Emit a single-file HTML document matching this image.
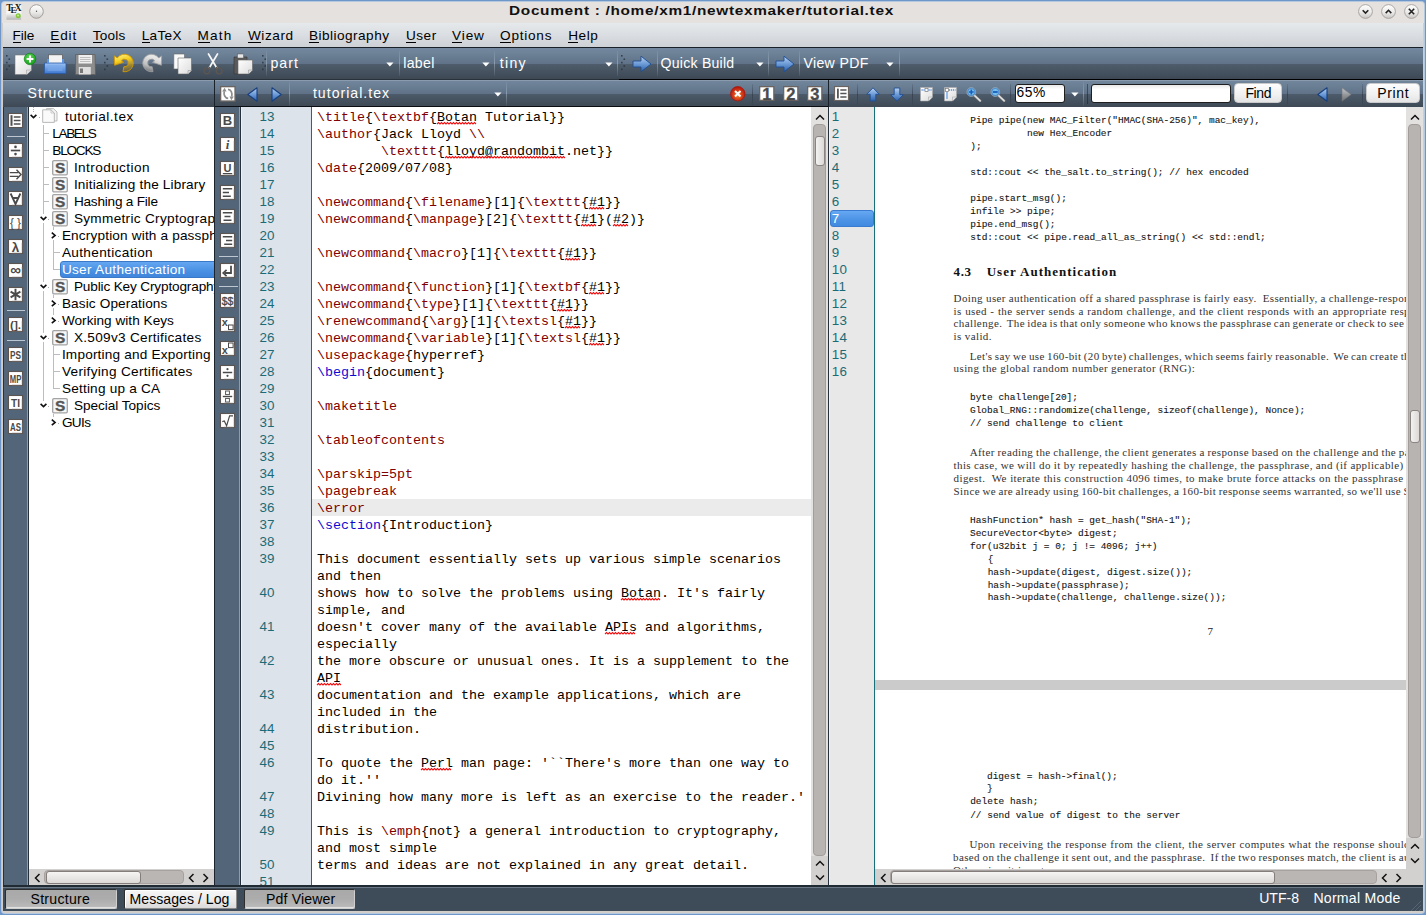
<!DOCTYPE html>
<html><head><meta charset="utf-8">
<style>
*{margin:0;padding:0;box-sizing:border-box}
html,body{width:1426px;height:915px;overflow:hidden;background:#6f96c8;font-family:"Liberation Sans",sans-serif}
.a{position:absolute}
.t{position:absolute;white-space:pre}
.blk{background:#0e1318}
.tb{background:linear-gradient(#74899f 0,#5f7287 53%,#4e5c6b 53%,#3d4854 100%)}
.hd{background:linear-gradient(#8a9bae 0,#8a9bae 1px,#71869c 1px,#5f7288 52%,#4d5b6a 52%,#3e4955 100%)}
.slate{background:#536579}
.sep{position:absolute;width:1px;background:linear-gradient(rgba(255,255,255,0.05),rgba(190,205,220,0.45),rgba(255,255,255,0.05))}
svg{position:absolute;overflow:visible}
</style></head><body>
<div class="a" style="left:0px;top:0px;width:1426px;height:915px;background:#6f96c8"></div>
<div class="a" style="left:1px;top:1px;width:1424px;height:913px;background:#b4c8e0;border-radius:4px"></div>
<div class="a" style="left:2px;top:2px;width:1422px;height:911px;background:#d3cdc9;border-radius:3px"></div>
<div class="a" style="left:2px;top:2px;width:1422px;height:21px;background:#e5e1df;border-radius:3px 3px 0 0"></div>
<div class="t" style="left:508.78px;top:11.23px;font:bold 13.2px 'Liberation Sans',sans-serif;height:0;line-height:0;color:#111;letter-spacing:0.600px;transform:scaleX(1.1649);transform-origin:0 0;">Document : /home/xm1/newtexmaker/tutorial.tex</div>
<svg width="0" height="0" style="position:absolute"><defs>
<linearGradient id="gBtn" x1="0" y1="0" x2="0" y2="1"><stop offset="0" stop-color="#ffffff"/><stop offset="0.55" stop-color="#ecebea"/><stop offset="1" stop-color="#c9c6c4"/></linearGradient>
<linearGradient id="gBlueArr" x1="0" y1="0" x2="0" y2="1"><stop offset="0" stop-color="#b9d3f2"/><stop offset="0.5" stop-color="#6c9ad6"/><stop offset="1" stop-color="#2c5fa8"/></linearGradient>
<linearGradient id="gPage" x1="0" y1="0" x2="1" y2="1"><stop offset="0" stop-color="#ffffff"/><stop offset="1" stop-color="#dcdcdc"/></linearGradient>
<linearGradient id="gSel" x1="0" y1="0" x2="0" y2="1"><stop offset="0" stop-color="#6fa9ee"/><stop offset="1" stop-color="#3b7ed6"/></linearGradient>
<radialGradient id="gRed" cx="0.5" cy="0.6" r="0.6"><stop offset="0" stop-color="#f08a2a"/><stop offset="0.55" stop-color="#d43a16"/><stop offset="1" stop-color="#b0140c"/></radialGradient>
<radialGradient id="gGreen" cx="0.45" cy="0.35" r="0.7"><stop offset="0" stop-color="#5fd85a"/><stop offset="1" stop-color="#0f9a14"/></radialGradient>
<linearGradient id="gYel" x1="0" y1="0" x2="0" y2="1"><stop offset="0" stop-color="#fff07a"/><stop offset="0.6" stop-color="#f1c40f"/><stop offset="1" stop-color="#c88a06"/></linearGradient>
<linearGradient id="gGray" x1="0" y1="0" x2="0" y2="1"><stop offset="0" stop-color="#d6d6d6"/><stop offset="1" stop-color="#7c7c7c"/></linearGradient>
<linearGradient id="gPrint" x1="0" y1="0" x2="0" y2="1"><stop offset="0" stop-color="#9cc3f5"/><stop offset="1" stop-color="#3d78d0"/></linearGradient>
<linearGradient id="gSlider" x1="0" y1="0" x2="1" y2="0"><stop offset="0" stop-color="#f4f3f2"/><stop offset="1" stop-color="#d9d6d4"/></linearGradient>
<linearGradient id="gSliderH" x1="0" y1="0" x2="0" y2="1"><stop offset="0" stop-color="#f7f6f5"/><stop offset="1" stop-color="#dad7d5"/></linearGradient>
</defs></svg>
<svg style="left:6px;top:4px;" width="16" height="17" viewBox="0 0 16 17"><defs><linearGradient id="gTexB" x1="0" y1="0" x2="0" y2="1"><stop offset="0" stop-color="#f2f2f2"/><stop offset="1" stop-color="#b5b5b5"/></linearGradient></defs><rect x="0.3" y="0.3" width="15" height="15.5" fill="#f8f8f8"/><rect x="0.3" y="9.3" width="15" height="6.5" fill="url(#gTexB)"/><text x="0.2" y="7.2" font-family="Liberation Serif" font-weight="bold" font-size="9.5" fill="#1a1a1a">T</text><text x="4.6" y="9" font-family="Liberation Serif" font-weight="bold" font-size="9" fill="#1a1a1a">E</text><text x="8.8" y="7.2" font-family="Liberation Serif" font-weight="bold" font-size="9.5" fill="#1a1a1a">X</text><circle cx="12.2" cy="11.7" r="2.5" fill="#84c83a"/><circle cx="12" cy="11.4" r="1" fill="#c2ec98"/></svg>
<svg style="left:29px;top:4px;" width="15" height="15" viewBox="0 0 15 15"><circle cx="7.5" cy="7.5" r="6.8" fill="url(#gBtn)" stroke="#9a9795" stroke-width="0.9"/><circle cx="7.5" cy="7.3" r="0.7" fill="#555"/></svg>
<svg style="left:1358.0px;top:4px;" width="15" height="15" viewBox="0 0 15 15"><circle cx="7.5" cy="7.5" r="6.9" fill="url(#gBtn)" stroke="#a19e9c" stroke-width="0.9"/><path d="M4.7 6.3 L7.5 9.1 L10.3 6.3" fill="none" stroke="#222" stroke-width="1.6"/></svg>
<svg style="left:1380.9px;top:4px;" width="15" height="15" viewBox="0 0 15 15"><circle cx="7.5" cy="7.5" r="6.9" fill="url(#gBtn)" stroke="#a19e9c" stroke-width="0.9"/><path d="M4.7 9.1 L7.5 6.3 L10.3 9.1" fill="none" stroke="#222" stroke-width="1.6"/></svg>
<svg style="left:1403.8px;top:4px;" width="15" height="15" viewBox="0 0 15 15"><circle cx="7.5" cy="7.5" r="6.9" fill="url(#gBtn)" stroke="#a19e9c" stroke-width="0.9"/><path d="M4.8 4.8 L10.2 10.2 M10.2 4.8 L4.8 10.2" fill="none" stroke="#222" stroke-width="1.6"/></svg>
<div class="a" style="left:3px;top:23px;width:1420px;height:24px;background:linear-gradient(#e6e9ec,#dadde1 50%,#cdd1d6)"></div>
<div class="t" style="left:12.38px;top:35.79px;font:13.6px 'Liberation Sans',sans-serif;height:0;line-height:0;color:#000;letter-spacing:-0.019px;">File</div>
<div class="a" style="left:13px;top:42px;width:8px;height:1px;background:#000"></div>
<div class="t" style="left:50.28px;top:35.79px;font:13.6px 'Liberation Sans',sans-serif;height:0;line-height:0;color:#000;letter-spacing:0.849px;">Edit</div>
<div class="a" style="left:50px;top:42px;width:10px;height:1px;background:#000"></div>
<div class="t" style="left:92.68px;top:35.79px;font:13.6px 'Liberation Sans',sans-serif;height:0;line-height:0;color:#000;letter-spacing:0.240px;">Tools</div>
<div class="a" style="left:93px;top:42px;width:9px;height:1px;background:#000"></div>
<div class="t" style="left:141.68px;top:35.79px;font:13.6px 'Liberation Sans',sans-serif;height:0;line-height:0;color:#000;letter-spacing:0.337px;">LaTeX</div>
<div class="a" style="left:142px;top:42px;width:8px;height:1px;background:#000"></div>
<div class="t" style="left:197.48px;top:35.79px;font:13.6px 'Liberation Sans',sans-serif;height:0;line-height:0;color:#000;letter-spacing:1.174px;">Math</div>
<div class="a" style="left:198px;top:42px;width:12px;height:1px;background:#000"></div>
<div class="t" style="left:247.98px;top:35.79px;font:13.6px 'Liberation Sans',sans-serif;height:0;line-height:0;color:#000;letter-spacing:0.573px;">Wizard</div>
<div class="a" style="left:248px;top:42px;width:13px;height:1px;background:#000"></div>
<div class="t" style="left:309.08px;top:35.79px;font:13.6px 'Liberation Sans',sans-serif;height:0;line-height:0;color:#000;letter-spacing:0.460px;">Bibliography</div>
<div class="a" style="left:309px;top:42px;width:10px;height:1px;background:#000"></div>
<div class="t" style="left:405.88px;top:35.79px;font:13.6px 'Liberation Sans',sans-serif;height:0;line-height:0;color:#000;letter-spacing:0.557px;">User</div>
<div class="a" style="left:406px;top:42px;width:10px;height:1px;background:#000"></div>
<div class="t" style="left:452.08px;top:35.79px;font:13.6px 'Liberation Sans',sans-serif;height:0;line-height:0;color:#000;letter-spacing:0.878px;">View</div>
<div class="a" style="left:452px;top:42px;width:10px;height:1px;background:#000"></div>
<div class="t" style="left:500.08px;top:35.79px;font:13.6px 'Liberation Sans',sans-serif;height:0;line-height:0;color:#000;letter-spacing:0.753px;">Options</div>
<div class="a" style="left:500px;top:42px;width:11px;height:1px;background:#000"></div>
<div class="t" style="left:568.28px;top:35.79px;font:13.6px 'Liberation Sans',sans-serif;height:0;line-height:0;color:#000;letter-spacing:0.541px;">Help</div>
<div class="a" style="left:568px;top:42px;width:10px;height:1px;background:#000"></div>
<div class="a" style="left:3px;top:47px;width:1420px;height:1px;background:#1a2027"></div>
<div class="a tb" style="left:3px;top:48px;width:1420px;height:31px"></div>
<div class="a" style="left:3px;top:79px;width:616px;height:1px;background:#28323b"></div>
<div class="a" style="left:619px;top:79px;width:804px;height:1px;background:#000"></div>
<svg style="left:6px;top:55px;" width="5" height="17" viewBox="0 0 5 17"><rect x="0" y="0.0" width="1.6" height="1.6" fill="#2a333c" opacity="0.8"/><rect x="2.5" y="3.4" width="1.6" height="1.6" fill="#2a333c" opacity="0.8"/><rect x="0" y="6.8" width="1.6" height="1.6" fill="#2a333c" opacity="0.8"/><rect x="2.5" y="10.2" width="1.6" height="1.6" fill="#2a333c" opacity="0.8"/><rect x="0" y="13.6" width="1.6" height="1.6" fill="#2a333c" opacity="0.8"/></svg>
<svg style="left:103.6px;top:55px;" width="5" height="17" viewBox="0 0 5 17"><rect x="0" y="0.0" width="1.6" height="1.6" fill="#2a333c" opacity="0.8"/><rect x="2.5" y="3.4" width="1.6" height="1.6" fill="#2a333c" opacity="0.8"/><rect x="0" y="6.8" width="1.6" height="1.6" fill="#2a333c" opacity="0.8"/><rect x="2.5" y="10.2" width="1.6" height="1.6" fill="#2a333c" opacity="0.8"/><rect x="0" y="13.6" width="1.6" height="1.6" fill="#2a333c" opacity="0.8"/></svg>
<svg style="left:262px;top:55px;" width="5" height="17" viewBox="0 0 5 17"><rect x="0" y="0.0" width="1.6" height="1.6" fill="#2a333c" opacity="0.8"/><rect x="2.5" y="3.4" width="1.6" height="1.6" fill="#2a333c" opacity="0.8"/><rect x="0" y="6.8" width="1.6" height="1.6" fill="#2a333c" opacity="0.8"/><rect x="2.5" y="10.2" width="1.6" height="1.6" fill="#2a333c" opacity="0.8"/><rect x="0" y="13.6" width="1.6" height="1.6" fill="#2a333c" opacity="0.8"/></svg>
<svg style="left:621.4px;top:55px;" width="5" height="17" viewBox="0 0 5 17"><rect x="0" y="0.0" width="1.6" height="1.6" fill="#2a333c" opacity="0.8"/><rect x="2.5" y="3.4" width="1.6" height="1.6" fill="#2a333c" opacity="0.8"/><rect x="0" y="6.8" width="1.6" height="1.6" fill="#2a333c" opacity="0.8"/><rect x="2.5" y="10.2" width="1.6" height="1.6" fill="#2a333c" opacity="0.8"/><rect x="0" y="13.6" width="1.6" height="1.6" fill="#2a333c" opacity="0.8"/></svg>
<svg style="left:14px;top:53px;" width="23" height="22" viewBox="0 0 23 22"><path d="M1 2 L13 2 L17.5 6.5 L17.5 17 L13 21.5 L1 21.5 Z" fill="url(#gPage)" stroke="#777" stroke-width="0.6"/><path d="M12.5 21.5 L12.5 17 L17.5 17" fill="#e0e0e0" stroke="#999" stroke-width="0.5"/><circle cx="16" cy="6" r="5.8" fill="url(#gGreen)" stroke="#0b7a0f" stroke-width="0.6"/><path d="M16 2.6 V9.4 M12.6 6 H19.4" stroke="#fff" stroke-width="2"/></svg>
<svg style="left:44px;top:54px;" width="23" height="21" viewBox="0 0 23 21"><rect x="4.5" y="0.8" width="14" height="9" fill="#f2f2f2" stroke="#555" stroke-width="0.7"/><path d="M0.5 9 L22 9 L22 19.5 L0.5 19.5 Z" fill="url(#gPrint)" stroke="#2b5ca8" stroke-width="0.8"/><rect x="3" y="5" width="2" height="5" fill="#5d93e0"/><rect x="18" y="5" width="2" height="5" fill="#5d93e0"/><rect x="3.5" y="11" width="15" height="6" fill="#7aa9ea" opacity="0.6"/></svg>
<svg style="left:75px;top:54px;" width="21" height="21" viewBox="0 0 21 21"><path d="M0.5 0.5 L20 0.5 L20.5 20.5 L0.5 20.5 Z" fill="#8d8d8d" stroke="#5c5c5c" stroke-width="0.7"/><rect x="3.5" y="1" width="13.5" height="8.5" fill="#efefef"/><path d="M5 3.5 H15.5 M5 5.5 H15.5 M5 7.5 H15.5" stroke="#aaa" stroke-width="0.7"/><rect x="3.8" y="13" width="12" height="7.5" fill="#dedede"/><rect x="5" y="14.5" width="3" height="4.5" fill="#777"/></svg>
<svg style="left:112px;top:53px;" width="22" height="20" viewBox="0 0 22 20"><defs><linearGradient id="gUndo" x1="0" y1="0" x2="0.3" y2="1"><stop offset="0" stop-color="#fff59a"/><stop offset="0.45" stop-color="#f4cc1a"/><stop offset="1" stop-color="#c89008" stop-opacity="0.35"/></linearGradient><linearGradient id="gRedo" x1="0" y1="0" x2="-0.3" y2="1"><stop offset="0" stop-color="#e6e6e6"/><stop offset="0.5" stop-color="#bdbdbd"/><stop offset="1" stop-color="#8a8a8a" stop-opacity="0.35"/></linearGradient></defs><path d="M5.29 4.95 A8.8 8.8 0 1 1 10.97 18.67 L11.84 13.74 A3.8 3.8 0 1 0 9.39 7.82 L11.52 9.31 L2.63 12.24 L2.34 2.89 Z" fill="url(#gUndo)" stroke="#d29a06" stroke-width="0.9" stroke-linejoin="round"/></svg>
<svg style="left:142px;top:53px;" width="22" height="20" viewBox="0 0 22 20"><path d="M16.71 4.95 A8.8 8.8 0 1 0 11.03 18.67 L10.16 13.74 A3.8 3.8 0 1 1 12.61 7.82 L10.48 9.31 L19.37 12.24 L19.66 2.89 Z" fill="url(#gRedo)" stroke="#a0a0a0" stroke-width="0.8" stroke-linejoin="round"/></svg>
<svg style="left:173px;top:53px;" width="20" height="22" viewBox="0 0 20 22"><path d="M0.8 1 L11.5 1 L11.5 16 L0.8 16 Z" fill="#fafafa" stroke="#666" stroke-width="0.6"/><path d="M5 5 L18.5 5 L18.5 17.5 L15 21 L5 21 Z" fill="url(#gPage)" stroke="#666" stroke-width="0.6"/><path d="M15 21 L15 17.5 L18.5 17.5" fill="#ddd" stroke="#888" stroke-width="0.5"/></svg>
<svg style="left:202px;top:53px;" width="22" height="22" viewBox="0 0 22 22"><path d="M6.5 1 L14.5 14.5 M15.5 1 L7.5 14.5" stroke="#f6f6f6" stroke-width="1.7" stroke-linecap="round"/><path d="M8 14 L6.5 16 M14 14 L15.5 16" stroke="#5e5650" stroke-width="1.3"/><circle cx="4.8" cy="18" r="2.9" fill="none" stroke="#5e5650" stroke-width="1.3"/><circle cx="17.2" cy="18" r="2.9" fill="none" stroke="#5e5650" stroke-width="1.3"/></svg>
<svg style="left:233px;top:53px;" width="21" height="22" viewBox="0 0 21 22"><path d="M1 4 L14 4 L14 21 L1 21 Z" fill="#5a5a5a" stroke="#333" stroke-width="0.6"/><rect x="4.5" y="1" width="6" height="4" fill="#e8e8e8" stroke="#555" stroke-width="0.5"/><path d="M5 7 L19.5 7 L19.5 17 L15.5 21 L5 21 Z" fill="url(#gPage)" stroke="#666" stroke-width="0.6"/><path d="M15.5 21 L15.5 17 L19.5 17" fill="#ddd" stroke="#888" stroke-width="0.5"/></svg>
<div class="sep" style="left:266.2px;top:51px;height:25px"></div>
<svg style="left:385.5px;top:62px;" width="8" height="5" viewBox="0 0 8 5"><path d="M0.3 0.5 L7.5 0.5 L3.9 4.6 Z" fill="#fff"/></svg>
<div class="sep" style="left:398.6px;top:51px;height:25px"></div>
<svg style="left:481.7px;top:62px;" width="8" height="5" viewBox="0 0 8 5"><path d="M0.3 0.5 L7.5 0.5 L3.9 4.6 Z" fill="#fff"/></svg>
<div class="sep" style="left:494.3px;top:51px;height:25px"></div>
<svg style="left:604.9px;top:62px;" width="8" height="5" viewBox="0 0 8 5"><path d="M0.3 0.5 L7.5 0.5 L3.9 4.6 Z" fill="#fff"/></svg>
<div class="sep" style="left:617.4px;top:51px;height:25px"></div>
<svg style="left:631.5px;top:55px;" width="20" height="18" viewBox="0 0 20 18"><path d="M1 6 L9 6 L9 1.2 L19 9 L9 16.8 L9 12 L1 12 Z" fill="url(#gBlueArr)" stroke="#1f4f94" stroke-width="0.9" stroke-linejoin="round"/></svg>
<div class="sep" style="left:656.6px;top:51px;height:25px"></div>
<svg style="left:755.6px;top:62px;" width="8" height="5" viewBox="0 0 8 5"><path d="M0.3 0.5 L7.5 0.5 L3.9 4.6 Z" fill="#fff"/></svg>
<div class="sep" style="left:768.4px;top:51px;height:25px"></div>
<svg style="left:774.5px;top:55px;" width="20" height="18" viewBox="0 0 20 18"><path d="M1 6 L9 6 L9 1.2 L19 9 L9 16.8 L9 12 L1 12 Z" fill="url(#gBlueArr)" stroke="#1f4f94" stroke-width="0.9" stroke-linejoin="round"/></svg>
<div class="sep" style="left:799.4px;top:51px;height:25px"></div>
<svg style="left:886.3px;top:62px;" width="8" height="5" viewBox="0 0 8 5"><path d="M0.3 0.5 L7.5 0.5 L3.9 4.6 Z" fill="#fff"/></svg>
<div class="sep" style="left:899.2px;top:51px;height:25px"></div>
<div class="t" style="left:270.45px;top:63.11px;font:14.1px 'Liberation Sans',sans-serif;height:0;line-height:0;color:#fff;letter-spacing:1.024px;">part</div>
<div class="t" style="left:403.15px;top:63.11px;font:14.1px 'Liberation Sans',sans-serif;height:0;line-height:0;color:#fff;letter-spacing:0.382px;">label</div>
<div class="t" style="left:499.85px;top:63.11px;font:14.1px 'Liberation Sans',sans-serif;height:0;line-height:0;color:#fff;letter-spacing:1.264px;">tiny</div>
<div class="t" style="left:660.55px;top:63.11px;font:14.1px 'Liberation Sans',sans-serif;height:0;line-height:0;color:#fff;letter-spacing:0.237px;">Quick Build</div>
<div class="t" style="left:803.45px;top:63.11px;font:14.1px 'Liberation Sans',sans-serif;height:0;line-height:0;color:#fff;letter-spacing:0.348px;">View PDF</div>
<div class="a hd" style="left:3px;top:80px;width:211px;height:27px"></div>
<div class="a" style="left:214px;top:80px;width:1px;height:27px;background:#1a2128"></div>
<div class="a hd" style="left:215px;top:80px;width:613px;height:26px"></div>
<div class="a" style="left:215px;top:106px;width:613px;height:1px;background:#0b0f13"></div>
<div class="a" style="left:828px;top:80px;width:1px;height:27px;background:#1a2128"></div>
<div class="a hd" style="left:829px;top:80px;width:594px;height:27px"></div>
<div class="t" style="left:27.55px;top:93.11px;font:14.1px 'Liberation Sans',sans-serif;height:0;line-height:0;color:#fff;letter-spacing:0.945px;">Structure</div>
<div class="t" style="left:312.95px;top:92.81px;font:14.1px 'Liberation Sans',sans-serif;height:0;line-height:0;color:#fff;letter-spacing:1.013px;">tutorial.tex</div>
<svg style="left:220px;top:86px;" width="15.7" height="15.7" viewBox="0 0 15.7 15.7"><rect x="0.65" y="0.65" width="14.399999999999999" height="14.399999999999999" fill="#fff" stroke="#6b6461" stroke-width="1.3"/><path d="M4.3 5.2 C3.4 8.6 5 12.2 8.2 12.4" fill="none" stroke="#8d8d8d" stroke-width="1.7"/><path d="M8 3.4 C11 3.6 12.6 7 11.7 10.6" fill="none" stroke="#8d8d8d" stroke-width="1.7"/><path d="M4.6 1.8 L2.2 5.6 L6.6 5.6 Z" fill="#8d8d8d"/><path d="M11.4 14.2 L13.8 10.4 L9.4 10.4 Z" fill="#8d8d8d"/></svg>
<svg style="left:246.5px;top:86.5px;" width="11" height="15" viewBox="0 0 11 15"><path d="M10 0.8 L10 14.2 L0.8 7.5 Z" fill="url(#gBlueArr)" stroke="#173f7e" stroke-width="1.1" stroke-linejoin="round"/></svg>
<svg style="left:270.5px;top:86.5px;" width="11" height="15" viewBox="0 0 11 15"><path d="M1 0.8 L1 14.2 L10.2 7.5 Z" fill="url(#gBlueArr)" stroke="#173f7e" stroke-width="1.1" stroke-linejoin="round"/></svg>
<div class="sep" style="left:288.5px;top:82px;height:24px"></div>
<svg style="left:493.7px;top:91.5px;" width="8" height="5" viewBox="0 0 8 5"><path d="M0.3 0.5 L7.5 0.5 L3.9 4.6 Z" fill="#fff"/></svg>
<div class="sep" style="left:506px;top:82px;height:24px"></div>
<svg style="left:729.5px;top:86px;" width="15.5" height="15.5" viewBox="0 0 15.5 15.5"><circle cx="7.75" cy="7.75" r="7.2" fill="url(#gRed)" stroke="#a8150c" stroke-width="0.8"/><path d="M5 5 L10.5 10.5 M10.5 5 L5 10.5" stroke="#fff" stroke-width="2"/></svg>
<div class="a" style="left:752.4px;top:84px;width:1px;height:21px;background:linear-gradient(rgba(40,50,62,0.15),rgba(40,50,62,0.55),rgba(40,50,62,0.15))"></div>
<svg style="left:759.2px;top:86.3px;" width="15.5" height="15" viewBox="0 0 15.5 15"><rect x="0.65" y="0.65" width="14.2" height="13.7" fill="#fff" stroke="#6b6461" stroke-width="1.3"/><text x="7.9" y="13.6" text-anchor="middle" font-family="Liberation Sans" font-weight="bold" font-size="16.5" fill="#4a4a4a" stroke="#4a4a4a" stroke-width="0.3">1</text></svg>
<svg style="left:783.2px;top:86.3px;" width="15.5" height="15" viewBox="0 0 15.5 15"><rect x="0.65" y="0.65" width="14.2" height="13.7" fill="#fff" stroke="#6b6461" stroke-width="1.3"/><text x="7.9" y="13.6" text-anchor="middle" font-family="Liberation Sans" font-weight="bold" font-size="16.5" fill="#4a4a4a" stroke="#4a4a4a" stroke-width="0.3">2</text></svg>
<svg style="left:807.2px;top:86.3px;" width="15.5" height="15" viewBox="0 0 15.5 15"><rect x="0.65" y="0.65" width="14.2" height="13.7" fill="#fff" stroke="#6b6461" stroke-width="1.3"/><text x="7.9" y="13.6" text-anchor="middle" font-family="Liberation Sans" font-weight="bold" font-size="16.5" fill="#4a4a4a" stroke="#4a4a4a" stroke-width="0.3">3</text></svg>
<svg style="left:834.3px;top:86.3px;" width="15" height="15" viewBox="0 0 15 15"><rect x="0.55" y="0.55" width="13.9" height="13.9" fill="#fff" stroke="#6b6461" stroke-width="1.1"/><rect x="3" y="2.6" width="1.8" height="9.8" fill="#555"/><path d="M6.3 4 H12.5 M6.3 7.5 H12.5 M6.3 11 H12.5" stroke="#555" stroke-width="1.5"/></svg>
<div class="a" style="left:857.2px;top:84px;width:1px;height:21px;background:linear-gradient(rgba(40,50,62,0.15),rgba(40,50,62,0.55),rgba(40,50,62,0.15))"></div>
<svg style="left:865.5px;top:86.5px;" width="14" height="15" viewBox="0 0 14 15"><path d="M7 0.8 L13.3 7.3 L9.8 7.3 L9.8 14 L4.2 14 L4.2 7.3 L0.7 7.3 Z" fill="url(#gBlueArr)" stroke="#1f4f94" stroke-width="0.9" stroke-linejoin="round"/></svg>
<svg style="left:889.5px;top:86.5px;" width="14" height="15" viewBox="0 0 14 15"><path d="M7 14.2 L13.3 7.7 L9.8 7.7 L9.8 1 L4.2 1 L4.2 7.7 L0.7 7.7 Z" fill="url(#gBlueArr)" stroke="#1f4f94" stroke-width="0.9" stroke-linejoin="round"/></svg>
<div class="a" style="left:911.7px;top:84px;width:1px;height:21px;background:linear-gradient(rgba(40,50,62,0.15),rgba(40,50,62,0.55),rgba(40,50,62,0.15))"></div>
<svg style="left:919.5px;top:87px;" width="13" height="14.5" viewBox="0 0 13 14.5"><path d="M0.5 0.5 L12.5 0.5 L12.5 10 L8.5 14 L0.5 14 Z" fill="url(#gPage)" stroke="#aaa" stroke-width="0.6"/><path d="M8.5 14 L8.5 10 L12.5 10" fill="#e6e6e6" stroke="#999" stroke-width="0.5"/><rect x="5" y="1.5" width="3" height="3" fill="#fff" stroke="#777" stroke-width="0.7"/><path d="M1.5 3 H4.5 M8.5 3 H11.5" stroke="#4d8fe6" stroke-width="1.4" stroke-dasharray="1.2 0.8"/></svg>
<svg style="left:943.6px;top:87px;" width="13" height="14.5" viewBox="0 0 13 14.5"><path d="M0.5 0.5 L12.5 0.5 L12.5 10 L8.5 14 L0.5 14 Z" fill="url(#gPage)" stroke="#aaa" stroke-width="0.6"/><path d="M8.5 14 L8.5 10 L12.5 10" fill="#e6e6e6" stroke="#999" stroke-width="0.5"/><rect x="1.5" y="1.5" width="3" height="3" fill="#fff" stroke="#777" stroke-width="0.7"/><path d="M5 3 H11.5" stroke="#4d8fe6" stroke-width="1.4" stroke-dasharray="1.2 0.8"/><path d="M3 5 V12" stroke="#4d8fe6" stroke-width="1.1"/></svg>
<svg style="left:965.6px;top:86.6px;" width="16" height="15" viewBox="0 0 16 15"><path d="M8.3 8.3 L14.2 13.8" stroke="#9a9a9a" stroke-width="2.4" stroke-linecap="round"/><path d="M8.3 8.3 L14.2 13.8" stroke="#e4e4e4" stroke-width="1.3" stroke-linecap="round"/><circle cx="5.3" cy="5" r="4.4" fill="#76c0e8" stroke="#8fa0ae" stroke-width="1"/><circle cx="5.3" cy="5" r="3.6" fill="none" stroke="#2a62c0" stroke-width="0.8" opacity="0.7"/><path d="M5.3 2.6 V7.4 M2.9 5 H7.7" stroke="#1a5cc0" stroke-width="1.6"/></svg>
<svg style="left:990.1px;top:86.6px;" width="16" height="15" viewBox="0 0 16 15"><path d="M8.3 8.3 L14.2 13.8" stroke="#9a9a9a" stroke-width="2.4" stroke-linecap="round"/><path d="M8.3 8.3 L14.2 13.8" stroke="#e4e4e4" stroke-width="1.3" stroke-linecap="round"/><circle cx="5.3" cy="5" r="4.4" fill="#76c0e8" stroke="#8fa0ae" stroke-width="1"/><circle cx="5.3" cy="5" r="3.6" fill="none" stroke="#2a62c0" stroke-width="0.8" opacity="0.7"/><path d="M2.9 5 H7.7" stroke="#1a5cc0" stroke-width="1.8"/></svg>
<div class="a" style="left:1010.4px;top:84px;width:1px;height:21px;background:linear-gradient(rgba(40,50,62,0.15),rgba(40,50,62,0.55),rgba(40,50,62,0.15))"></div>
<div class="a" style="left:1015.4px;top:84.1px;width:49.2px;height:18.5px;border:1px solid #1e1e1e;border-radius:3px;background:linear-gradient(#e9e9e9,#fff 25%,#fff)"></div>
<div class="t" style="left:1016.57px;top:92.92px;font:13.8px 'Liberation Sans',sans-serif;height:0;line-height:0;color:#000;letter-spacing:0.544px;">65%</div>
<svg style="left:1070.8px;top:92px;" width="8" height="5" viewBox="0 0 8 5"><path d="M0.3 0.5 L7.5 0.5 L3.9 4.6 Z" fill="#fff"/></svg>
<div class="sep" style="left:1083.2px;top:82px;height:24px"></div>
<div class="a" style="left:1087px;top:84px;width:1px;height:20px;background:rgba(20,28,36,0.5)"></div>
<div class="a" style="left:1090.5px;top:83.7px;width:140.5px;height:19.2px;border:1px solid #1e1e1e;border-radius:3px;background:linear-gradient(#e9e9e9,#fff 25%,#fff)"></div>
<div class="a" style="left:1234.2px;top:83.2px;width:47.8px;height:19.8px;border-radius:4px;background:linear-gradient(#fdfdfd,#f0f0f0 60%,#e4e4e4);border:1px solid #c9c9c9"></div>
<div class="t" style="left:1245.46px;top:92.85px;font:14px 'Liberation Sans',sans-serif;height:0;line-height:0;color:#000;letter-spacing:-0.389px;">Find</div>
<div class="a" style="left:1287.3px;top:84px;width:1px;height:21px;background:linear-gradient(rgba(40,50,62,0.15),rgba(40,50,62,0.55),rgba(40,50,62,0.15))"></div>
<svg style="left:1316.8px;top:86.5px;" width="11" height="15" viewBox="0 0 11 15"><path d="M10 0.8 L10 14.2 L0.8 7.5 Z" fill="url(#gBlueArr)" stroke="#173f7e" stroke-width="1.1" stroke-linejoin="round"/></svg>
<svg style="left:1340.7px;top:86.5px;" width="11" height="15" viewBox="0 0 11 15"><path d="M1 0.8 L1 14.2 L10.2 7.5 Z" fill="url(#gGray)" stroke="#7a7a7a" stroke-width="0.6" stroke-linejoin="round" opacity="0.8"/></svg>
<div class="a" style="left:1361.5px;top:84px;width:1px;height:21px;background:linear-gradient(rgba(40,50,62,0.15),rgba(40,50,62,0.55),rgba(40,50,62,0.15))"></div>
<div class="a" style="left:1366.3px;top:83.2px;width:53.5px;height:19.8px;border-radius:4px;background:linear-gradient(#fdfdfd,#f0f0f0 60%,#e4e4e4);border:1px solid #c9c9c9"></div>
<div class="t" style="left:1377.36px;top:93.15px;font:14px 'Liberation Sans',sans-serif;height:0;line-height:0;color:#000;letter-spacing:0.617px;">Print</div>
<div class="a" style="left:3px;top:107px;width:25px;height:779px;background:#536579"></div>
<div class="a" style="left:3px;top:107px;width:1px;height:779px;background:#27313b"></div>
<div class="a" style="left:26.7px;top:107px;width:1.1px;height:779px;background:#8e9bab"></div>
<div class="a" style="left:28px;top:107px;width:1px;height:779px;background:#27313b"></div>
<div class="a" style="left:29px;top:107px;width:185px;height:779px;background:#fff"></div>
<div class="a" style="left:214px;top:107px;width:25px;height:779px;background:#536579"></div>
<div class="a" style="left:214px;top:107px;width:1.4px;height:779px;background:#1c252e"></div>
<div class="a" style="left:238.8px;top:107px;width:1px;height:779px;background:#8e9bab"></div>
<div class="a" style="left:239.8px;top:107px;width:1.2px;height:779px;background:#27313b"></div>
<div class="a" style="left:241px;top:107px;width:1px;height:779px;background:#eef1f7"></div>
<div class="a" style="left:242px;top:107px;width:69px;height:779px;background:#dde3eb"></div>
<div class="a" style="left:311px;top:107px;width:1px;height:779px;background:#17707a"></div>
<div class="a" style="left:312px;top:107px;width:499px;height:779px;background:#fff"></div>
<div class="a" style="left:811px;top:107px;width:17px;height:779px;background:#e1dfde"></div>
<div class="a" style="left:828px;top:107px;width:1.2px;height:779px;background:#27313b"></div>
<div class="a" style="left:829.2px;top:107px;width:0.8px;height:779px;background:#eef1f7"></div>
<div class="a" style="left:830px;top:107px;width:44px;height:779px;background:#e8e8e8"></div>
<div class="a" style="left:873.8px;top:107px;width:0.7px;height:779px;background:#f2eeec"></div>
<div class="a" style="left:874.4px;top:107px;width:1.1px;height:779px;background:#17707a"></div>
<div class="a" style="left:875.5px;top:107px;width:531px;height:762px;background:#fff"></div>
<div class="a" style="left:1406px;top:107px;width:17px;height:779px;background:#e1dfde"></div>
<div class="a" style="left:28px;top:107px;width:186px;height:762px;overflow:hidden">
<div class="a" style="left:5.299999999999997px;top:0px;width:1px;height:1.2px;background:#b0b0b0"></div>
<div class="a" style="left:5.299999999999997px;top:2px;width:1px;height:1.2px;background:#b0b0b0"></div>
<div class="a" style="left:5.299999999999997px;top:4px;width:1px;height:1.2px;background:#b0b0b0"></div>
<div class="a" style="left:10.600000000000001px;top:9.5px;width:1px;height:1px;background:#aaa"></div>
<div class="a" style="left:15px;top:18px;width:1px;height:88.9px;background:#bdbdbd"></div>
<div class="a" style="left:15px;top:116.20000000000002px;width:1px;height:58.69999999999996px;background:#bdbdbd"></div>
<div class="a" style="left:15px;top:184.2px;width:1px;height:41.69999999999999px;background:#bdbdbd"></div>
<div class="a" style="left:15px;top:235.2px;width:1px;height:58.69999999999999px;background:#bdbdbd"></div>
<div class="a" style="left:15px;top:26px;width:6px;height:1px;background:#bdbdbd"></div>
<div class="a" style="left:15px;top:43px;width:6px;height:1px;background:#bdbdbd"></div>
<div class="a" style="left:15px;top:60px;width:6px;height:1px;background:#bdbdbd"></div>
<div class="a" style="left:15px;top:77px;width:6px;height:1px;background:#bdbdbd"></div>
<div class="a" style="left:15px;top:94px;width:6px;height:1px;background:#bdbdbd"></div>
<div class="a" style="left:20.200000000000003px;top:111.5px;width:1px;height:1px;background:#aaa"></div>
<div class="a" style="left:20.200000000000003px;top:179.5px;width:1px;height:1px;background:#aaa"></div>
<div class="a" style="left:20.200000000000003px;top:230.5px;width:1px;height:1px;background:#aaa"></div>
<div class="a" style="left:20.200000000000003px;top:298.5px;width:1px;height:1px;background:#aaa"></div>
<div class="a" style="left:25px;top:119.5px;width:1px;height:3.5px;background:#bdbdbd"></div>
<div class="a" style="left:25px;top:133px;width:1px;height:30px;background:#bdbdbd"></div>
<div class="a" style="left:25px;top:145px;width:6.5px;height:1px;background:#bdbdbd"></div>
<div class="a" style="left:25px;top:162px;width:6.5px;height:1px;background:#bdbdbd"></div>
<div class="a" style="left:29.5px;top:128.5px;width:1px;height:1px;background:#aaa"></div>
<div class="a" style="left:25px;top:187.5px;width:1px;height:3.5px;background:#bdbdbd"></div>
<div class="a" style="left:25px;top:201px;width:1px;height:7px;background:#bdbdbd"></div>
<div class="a" style="left:29.5px;top:196.5px;width:1px;height:1px;background:#aaa"></div>
<div class="a" style="left:29.5px;top:213.5px;width:1px;height:1px;background:#aaa"></div>
<div class="a" style="left:25px;top:238.5px;width:1px;height:43.5px;background:#bdbdbd"></div>
<div class="a" style="left:25px;top:247px;width:6.5px;height:1px;background:#bdbdbd"></div>
<div class="a" style="left:25px;top:264px;width:6.5px;height:1px;background:#bdbdbd"></div>
<div class="a" style="left:25px;top:281px;width:6.5px;height:1px;background:#bdbdbd"></div>
<div class="a" style="left:25px;top:306.5px;width:1px;height:3.5px;background:#bdbdbd"></div>
<div class="a" style="left:29.5px;top:315.5px;width:1px;height:1px;background:#aaa"></div>
<div class="t" style="left:36.90px;top:10.19px;font:13.6px 'Liberation Sans',sans-serif;height:0;line-height:0;color:#000;letter-spacing:0.515px;">tutorial.tex</div>
<svg style="left:2.3000000000000007px;top:6.900000000000007px;" width="7" height="6" viewBox="0 0 7 6"><path d="M0.6 0.9 L3.5 3.7 L6.4 0.9" fill="none" stroke="#111" stroke-width="1.6"/></svg>
<div class="t" style="left:24.30px;top:27.19px;font:13.6px 'Liberation Sans',sans-serif;height:0;line-height:0;color:#000;letter-spacing:-1.398px;">LABELS</div>
<div class="t" style="left:24.30px;top:44.19px;font:13.6px 'Liberation Sans',sans-serif;height:0;line-height:0;color:#000;letter-spacing:-1.226px;">BLOCKS</div>
<div class="t" style="left:45.90px;top:61.19px;font:13.6px 'Liberation Sans',sans-serif;height:0;line-height:0;color:#000;letter-spacing:0.413px;">Introduction</div>
<svg style="left:24.200000000000003px;top:53.0px;" width="16" height="15.5" viewBox="0 0 16 15.5"><rect x="0.7" y="0.7" width="14.6" height="14.1" rx="1.2" fill="#f6f6f6" stroke="#a3a3a3" stroke-width="1.3"/><text x="8.1" y="13.2" text-anchor="middle" font-family="Liberation Sans" font-weight="bold" font-size="15.5" fill="#555" stroke="#555" stroke-width="0.3">S</text></svg>
<div class="t" style="left:45.90px;top:78.19px;font:13.6px 'Liberation Sans',sans-serif;height:0;line-height:0;color:#000;letter-spacing:0.162px;">Initializing the Library</div>
<svg style="left:24.200000000000003px;top:70.0px;" width="16" height="15.5" viewBox="0 0 16 15.5"><rect x="0.7" y="0.7" width="14.6" height="14.1" rx="1.2" fill="#f6f6f6" stroke="#a3a3a3" stroke-width="1.3"/><text x="8.1" y="13.2" text-anchor="middle" font-family="Liberation Sans" font-weight="bold" font-size="15.5" fill="#555" stroke="#555" stroke-width="0.3">S</text></svg>
<div class="t" style="left:45.90px;top:95.19px;font:13.6px 'Liberation Sans',sans-serif;height:0;line-height:0;color:#000;letter-spacing:-0.215px;">Hashing a File</div>
<svg style="left:24.200000000000003px;top:87.0px;" width="16" height="15.5" viewBox="0 0 16 15.5"><rect x="0.7" y="0.7" width="14.6" height="14.1" rx="1.2" fill="#f6f6f6" stroke="#a3a3a3" stroke-width="1.3"/><text x="8.1" y="13.2" text-anchor="middle" font-family="Liberation Sans" font-weight="bold" font-size="15.5" fill="#555" stroke="#555" stroke-width="0.3">S</text></svg>
<div class="t" style="left:45.90px;top:112.19px;font:13.6px 'Liberation Sans',sans-serif;height:0;line-height:0;color:#000;letter-spacing:0.309px;">Symmetric Cryptography</div>
<svg style="left:24.200000000000003px;top:104.0px;" width="16" height="15.5" viewBox="0 0 16 15.5"><rect x="0.7" y="0.7" width="14.6" height="14.1" rx="1.2" fill="#f6f6f6" stroke="#a3a3a3" stroke-width="1.3"/><text x="8.1" y="13.2" text-anchor="middle" font-family="Liberation Sans" font-weight="bold" font-size="15.5" fill="#555" stroke="#555" stroke-width="0.3">S</text></svg>
<svg style="left:11.799999999999997px;top:108.9px;" width="7" height="6" viewBox="0 0 7 6"><path d="M0.6 0.9 L3.5 3.7 L6.4 0.9" fill="none" stroke="#111" stroke-width="1.6"/></svg>
<div class="t" style="left:33.90px;top:129.19px;font:13.6px 'Liberation Sans',sans-serif;height:0;line-height:0;color:#000;letter-spacing:0.166px;">Encryption with a passphrase</div>
<svg style="left:23.1px;top:125.30000000000001px;" width="6" height="7" viewBox="0 0 6 7"><path d="M0.8 0.6 L4.1 3.4 L0.8 6.2" fill="none" stroke="#111" stroke-width="1.6"/></svg>
<div class="t" style="left:33.90px;top:146.19px;font:13.6px 'Liberation Sans',sans-serif;height:0;line-height:0;color:#000;letter-spacing:0.353px;">Authentication</div>
<div class="a" style="left:31.5px;top:154.3px;width:158.5px;height:16.3px;border-radius:3px;background:linear-gradient(#64a6f0,#4b92e4 55%,#3f86dc);border:1px solid #3a78c8"></div>
<div class="t" style="left:33.90px;top:163.19px;font:13.6px 'Liberation Sans',sans-serif;height:0;line-height:0;color:#fff;letter-spacing:0.300px;">User Authentication</div>
<div class="t" style="left:45.90px;top:180.19px;font:13.6px 'Liberation Sans',sans-serif;height:0;line-height:0;color:#000;letter-spacing:-0.146px;">Public Key Cryptography</div>
<svg style="left:24.200000000000003px;top:172.0px;" width="16" height="15.5" viewBox="0 0 16 15.5"><rect x="0.7" y="0.7" width="14.6" height="14.1" rx="1.2" fill="#f6f6f6" stroke="#a3a3a3" stroke-width="1.3"/><text x="8.1" y="13.2" text-anchor="middle" font-family="Liberation Sans" font-weight="bold" font-size="15.5" fill="#555" stroke="#555" stroke-width="0.3">S</text></svg>
<svg style="left:11.799999999999997px;top:176.89999999999998px;" width="7" height="6" viewBox="0 0 7 6"><path d="M0.6 0.9 L3.5 3.7 L6.4 0.9" fill="none" stroke="#111" stroke-width="1.6"/></svg>
<div class="t" style="left:33.90px;top:197.19px;font:13.6px 'Liberation Sans',sans-serif;height:0;line-height:0;color:#000;letter-spacing:0.130px;">Basic Operations</div>
<svg style="left:23.1px;top:193.29999999999998px;" width="6" height="7" viewBox="0 0 6 7"><path d="M0.8 0.6 L4.1 3.4 L0.8 6.2" fill="none" stroke="#111" stroke-width="1.6"/></svg>
<div class="t" style="left:33.90px;top:214.19px;font:13.6px 'Liberation Sans',sans-serif;height:0;line-height:0;color:#000;letter-spacing:0.026px;">Working with Keys</div>
<svg style="left:23.1px;top:210.29999999999998px;" width="6" height="7" viewBox="0 0 6 7"><path d="M0.8 0.6 L4.1 3.4 L0.8 6.2" fill="none" stroke="#111" stroke-width="1.6"/></svg>
<div class="t" style="left:45.90px;top:231.19px;font:13.6px 'Liberation Sans',sans-serif;height:0;line-height:0;color:#000;letter-spacing:0.297px;">X.509v3 Certificates</div>
<svg style="left:24.200000000000003px;top:223.0px;" width="16" height="15.5" viewBox="0 0 16 15.5"><rect x="0.7" y="0.7" width="14.6" height="14.1" rx="1.2" fill="#f6f6f6" stroke="#a3a3a3" stroke-width="1.3"/><text x="8.1" y="13.2" text-anchor="middle" font-family="Liberation Sans" font-weight="bold" font-size="15.5" fill="#555" stroke="#555" stroke-width="0.3">S</text></svg>
<svg style="left:11.799999999999997px;top:227.89999999999998px;" width="7" height="6" viewBox="0 0 7 6"><path d="M0.6 0.9 L3.5 3.7 L6.4 0.9" fill="none" stroke="#111" stroke-width="1.6"/></svg>
<div class="t" style="left:33.90px;top:248.19px;font:13.6px 'Liberation Sans',sans-serif;height:0;line-height:0;color:#000;letter-spacing:0.194px;">Importing and Exporting</div>
<div class="t" style="left:33.90px;top:265.19px;font:13.6px 'Liberation Sans',sans-serif;height:0;line-height:0;color:#000;letter-spacing:0.313px;">Verifying Certificates</div>
<div class="t" style="left:33.90px;top:282.19px;font:13.6px 'Liberation Sans',sans-serif;height:0;line-height:0;color:#000;letter-spacing:0.205px;">Setting up a CA</div>
<div class="t" style="left:45.90px;top:299.19px;font:13.6px 'Liberation Sans',sans-serif;height:0;line-height:0;color:#000;letter-spacing:-0.025px;">Special Topics</div>
<svg style="left:24.200000000000003px;top:291.0px;" width="16" height="15.5" viewBox="0 0 16 15.5"><rect x="0.7" y="0.7" width="14.6" height="14.1" rx="1.2" fill="#f6f6f6" stroke="#a3a3a3" stroke-width="1.3"/><text x="8.1" y="13.2" text-anchor="middle" font-family="Liberation Sans" font-weight="bold" font-size="15.5" fill="#555" stroke="#555" stroke-width="0.3">S</text></svg>
<svg style="left:11.799999999999997px;top:295.9px;" width="7" height="6" viewBox="0 0 7 6"><path d="M0.6 0.9 L3.5 3.7 L6.4 0.9" fill="none" stroke="#111" stroke-width="1.6"/></svg>
<div class="t" style="left:33.90px;top:316.19px;font:13.6px 'Liberation Sans',sans-serif;height:0;line-height:0;color:#000;letter-spacing:-0.592px;">GUIs</div>
<svg style="left:23.1px;top:312.3px;" width="6" height="7" viewBox="0 0 6 7"><path d="M0.8 0.6 L4.1 3.4 L0.8 6.2" fill="none" stroke="#111" stroke-width="1.6"/></svg>
<svg style="left:14px;top:1px;" width="16" height="15" viewBox="0 0 16 15"><path d="M4.5 0.6 L11.5 0.6 L15 4 L15 13 L4.5 13 Z" fill="#f4f4f4" stroke="#b5b5b5" stroke-width="0.9"/><path d="M0.7 1.8 L9 1.8 L12.3 5 L12.3 14.4 L0.7 14.4 Z" fill="#fafafa" stroke="#b0b0b0" stroke-width="0.9"/><path d="M9 1.8 L9 5 L12.3 5" fill="none" stroke="#b8b8b8" stroke-width="0.7"/></svg>
</div>
<div class="a" style="left:312px;top:499px;width:499px;height:17px;background:#ebebeb"></div>
<div class="t" style="left:259.48px;top:117.16px;font:13.4px 'Liberation Sans',sans-serif;height:0;line-height:0;color:#1b6b76;letter-spacing:0.200px;">13</div>
<div class="t" style="left:317.00px;top:117.85px;font:13.33px 'Liberation Mono',monospace;height:0;line-height:0;color:#800000;">\title</div>
<div class="t" style="left:365.00px;top:117.85px;font:13.33px 'Liberation Mono',monospace;height:0;line-height:0;color:#000;">{</div>
<div class="t" style="left:373.00px;top:117.85px;font:13.33px 'Liberation Mono',monospace;height:0;line-height:0;color:#800000;">\textbf</div>
<div class="t" style="left:429.00px;top:117.85px;font:13.33px 'Liberation Mono',monospace;height:0;line-height:0;color:#000;">{</div>
<div class="t" style="left:437.00px;top:117.85px;font:13.33px 'Liberation Mono',monospace;height:0;line-height:0;color:#000;">Botan</div>
<svg style="left:437px;top:121.6px;" width="40" height="3" viewBox="0 0 40 3"><path d="M0 2 l1.5 -1.4 l1.5 1.4 l1.5 -1.4 l1.5 1.4 l1.5 -1.4 l1.5 1.4 l1.5 -1.4 l1.5 1.4 l1.5 -1.4 l1.5 1.4 l1.5 -1.4 l1.5 1.4 l1.5 -1.4 l1.5 1.4 l1.5 -1.4 l1.5 1.4 l1.5 -1.4 l1.5 1.4 l1.5 -1.4 l1.5 1.4 l1.5 -1.4 l1.5 1.4 l1.5 -1.4 l1.5 1.4 l1.5 -1.4 l1.5 1.4" fill="none" stroke="#f01010" stroke-width="1.1"/></svg>
<div class="t" style="left:477.00px;top:117.85px;font:13.33px 'Liberation Mono',monospace;height:0;line-height:0;color:#000;"> Tutorial}}</div>
<div class="t" style="left:259.48px;top:134.16px;font:13.4px 'Liberation Sans',sans-serif;height:0;line-height:0;color:#1b6b76;letter-spacing:0.200px;">14</div>
<div class="t" style="left:317.00px;top:134.85px;font:13.33px 'Liberation Mono',monospace;height:0;line-height:0;color:#800000;">\author</div>
<div class="t" style="left:373.00px;top:134.85px;font:13.33px 'Liberation Mono',monospace;height:0;line-height:0;color:#000;">{Jack Lloyd </div>
<div class="t" style="left:469.00px;top:134.85px;font:13.33px 'Liberation Mono',monospace;height:0;line-height:0;color:#800000;">\\</div>
<div class="t" style="left:259.48px;top:151.16px;font:13.4px 'Liberation Sans',sans-serif;height:0;line-height:0;color:#1b6b76;letter-spacing:0.200px;">15</div>
<div class="t" style="left:381.00px;top:151.85px;font:13.33px 'Liberation Mono',monospace;height:0;line-height:0;color:#800000;">\texttt</div>
<div class="t" style="left:437.00px;top:151.85px;font:13.33px 'Liberation Mono',monospace;height:0;line-height:0;color:#000;">{</div>
<div class="t" style="left:445.00px;top:151.85px;font:13.33px 'Liberation Mono',monospace;height:0;line-height:0;color:#000;">lloyd@randombit</div>
<svg style="left:445px;top:155.6px;" width="120" height="3" viewBox="0 0 120 3"><path d="M0 2 l1.5 -1.4 l1.5 1.4 l1.5 -1.4 l1.5 1.4 l1.5 -1.4 l1.5 1.4 l1.5 -1.4 l1.5 1.4 l1.5 -1.4 l1.5 1.4 l1.5 -1.4 l1.5 1.4 l1.5 -1.4 l1.5 1.4 l1.5 -1.4 l1.5 1.4 l1.5 -1.4 l1.5 1.4 l1.5 -1.4 l1.5 1.4 l1.5 -1.4 l1.5 1.4 l1.5 -1.4 l1.5 1.4 l1.5 -1.4 l1.5 1.4 l1.5 -1.4 l1.5 1.4 l1.5 -1.4 l1.5 1.4 l1.5 -1.4 l1.5 1.4 l1.5 -1.4 l1.5 1.4 l1.5 -1.4 l1.5 1.4 l1.5 -1.4 l1.5 1.4 l1.5 -1.4 l1.5 1.4 l1.5 -1.4 l1.5 1.4 l1.5 -1.4 l1.5 1.4 l1.5 -1.4 l1.5 1.4 l1.5 -1.4 l1.5 1.4 l1.5 -1.4 l1.5 1.4 l1.5 -1.4 l1.5 1.4 l1.5 -1.4 l1.5 1.4 l1.5 -1.4 l1.5 1.4 l1.5 -1.4 l1.5 1.4 l1.5 -1.4 l1.5 1.4 l1.5 -1.4 l1.5 1.4 l1.5 -1.4 l1.5 1.4 l1.5 -1.4 l1.5 1.4 l1.5 -1.4 l1.5 1.4 l1.5 -1.4 l1.5 1.4 l1.5 -1.4 l1.5 1.4 l1.5 -1.4 l1.5 1.4 l1.5 -1.4 l1.5 1.4 l1.5 -1.4 l1.5 1.4 l1.5 -1.4 l1.5 1.4" fill="none" stroke="#f01010" stroke-width="1.1"/></svg>
<div class="t" style="left:565.00px;top:151.85px;font:13.33px 'Liberation Mono',monospace;height:0;line-height:0;color:#000;">.net}}</div>
<div class="t" style="left:259.48px;top:168.16px;font:13.4px 'Liberation Sans',sans-serif;height:0;line-height:0;color:#1b6b76;letter-spacing:0.200px;">16</div>
<div class="t" style="left:317.00px;top:168.85px;font:13.33px 'Liberation Mono',monospace;height:0;line-height:0;color:#800000;">\date</div>
<div class="t" style="left:357.00px;top:168.85px;font:13.33px 'Liberation Mono',monospace;height:0;line-height:0;color:#000;">{2009/07/08}</div>
<div class="t" style="left:259.48px;top:185.16px;font:13.4px 'Liberation Sans',sans-serif;height:0;line-height:0;color:#1b6b76;letter-spacing:0.200px;">17</div>
<div class="t" style="left:259.48px;top:202.16px;font:13.4px 'Liberation Sans',sans-serif;height:0;line-height:0;color:#1b6b76;letter-spacing:0.200px;">18</div>
<div class="t" style="left:317.00px;top:202.85px;font:13.33px 'Liberation Mono',monospace;height:0;line-height:0;color:#800000;">\newcommand</div>
<div class="t" style="left:405.00px;top:202.85px;font:13.33px 'Liberation Mono',monospace;height:0;line-height:0;color:#000;">{</div>
<div class="t" style="left:413.00px;top:202.85px;font:13.33px 'Liberation Mono',monospace;height:0;line-height:0;color:#800000;">\filename</div>
<div class="t" style="left:485.00px;top:202.85px;font:13.33px 'Liberation Mono',monospace;height:0;line-height:0;color:#000;">}[1]{</div>
<div class="t" style="left:525.00px;top:202.85px;font:13.33px 'Liberation Mono',monospace;height:0;line-height:0;color:#800000;">\texttt</div>
<div class="t" style="left:581.00px;top:202.85px;font:13.33px 'Liberation Mono',monospace;height:0;line-height:0;color:#000;">{</div>
<div class="t" style="left:589.00px;top:202.85px;font:13.33px 'Liberation Mono',monospace;height:0;line-height:0;color:#000;">#1</div>
<svg style="left:589px;top:206.6px;" width="16" height="3" viewBox="0 0 16 3"><path d="M0 2 l1.5 -1.4 l1.5 1.4 l1.5 -1.4 l1.5 1.4 l1.5 -1.4 l1.5 1.4 l1.5 -1.4 l1.5 1.4 l1.5 -1.4 l1.5 1.4" fill="none" stroke="#f01010" stroke-width="1.1"/></svg>
<div class="t" style="left:605.00px;top:202.85px;font:13.33px 'Liberation Mono',monospace;height:0;line-height:0;color:#000;">}}</div>
<div class="t" style="left:259.48px;top:219.16px;font:13.4px 'Liberation Sans',sans-serif;height:0;line-height:0;color:#1b6b76;letter-spacing:0.200px;">19</div>
<div class="t" style="left:317.00px;top:219.85px;font:13.33px 'Liberation Mono',monospace;height:0;line-height:0;color:#800000;">\newcommand</div>
<div class="t" style="left:405.00px;top:219.85px;font:13.33px 'Liberation Mono',monospace;height:0;line-height:0;color:#000;">{</div>
<div class="t" style="left:413.00px;top:219.85px;font:13.33px 'Liberation Mono',monospace;height:0;line-height:0;color:#800000;">\manpage</div>
<div class="t" style="left:477.00px;top:219.85px;font:13.33px 'Liberation Mono',monospace;height:0;line-height:0;color:#000;">}[2]{</div>
<div class="t" style="left:517.00px;top:219.85px;font:13.33px 'Liberation Mono',monospace;height:0;line-height:0;color:#800000;">\texttt</div>
<div class="t" style="left:573.00px;top:219.85px;font:13.33px 'Liberation Mono',monospace;height:0;line-height:0;color:#000;">{</div>
<div class="t" style="left:581.00px;top:219.85px;font:13.33px 'Liberation Mono',monospace;height:0;line-height:0;color:#000;">#1</div>
<svg style="left:581px;top:223.6px;" width="16" height="3" viewBox="0 0 16 3"><path d="M0 2 l1.5 -1.4 l1.5 1.4 l1.5 -1.4 l1.5 1.4 l1.5 -1.4 l1.5 1.4 l1.5 -1.4 l1.5 1.4 l1.5 -1.4 l1.5 1.4" fill="none" stroke="#f01010" stroke-width="1.1"/></svg>
<div class="t" style="left:597.00px;top:219.85px;font:13.33px 'Liberation Mono',monospace;height:0;line-height:0;color:#000;">}(</div>
<div class="t" style="left:613.00px;top:219.85px;font:13.33px 'Liberation Mono',monospace;height:0;line-height:0;color:#000;">#2</div>
<svg style="left:613px;top:223.6px;" width="16" height="3" viewBox="0 0 16 3"><path d="M0 2 l1.5 -1.4 l1.5 1.4 l1.5 -1.4 l1.5 1.4 l1.5 -1.4 l1.5 1.4 l1.5 -1.4 l1.5 1.4 l1.5 -1.4 l1.5 1.4" fill="none" stroke="#f01010" stroke-width="1.1"/></svg>
<div class="t" style="left:629.00px;top:219.85px;font:13.33px 'Liberation Mono',monospace;height:0;line-height:0;color:#000;">)}</div>
<div class="t" style="left:259.48px;top:236.16px;font:13.4px 'Liberation Sans',sans-serif;height:0;line-height:0;color:#1b6b76;letter-spacing:0.200px;">20</div>
<div class="t" style="left:259.48px;top:253.16px;font:13.4px 'Liberation Sans',sans-serif;height:0;line-height:0;color:#1b6b76;letter-spacing:0.200px;">21</div>
<div class="t" style="left:317.00px;top:253.85px;font:13.33px 'Liberation Mono',monospace;height:0;line-height:0;color:#800000;">\newcommand</div>
<div class="t" style="left:405.00px;top:253.85px;font:13.33px 'Liberation Mono',monospace;height:0;line-height:0;color:#000;">{</div>
<div class="t" style="left:413.00px;top:253.85px;font:13.33px 'Liberation Mono',monospace;height:0;line-height:0;color:#800000;">\macro</div>
<div class="t" style="left:461.00px;top:253.85px;font:13.33px 'Liberation Mono',monospace;height:0;line-height:0;color:#000;">}[1]{</div>
<div class="t" style="left:501.00px;top:253.85px;font:13.33px 'Liberation Mono',monospace;height:0;line-height:0;color:#800000;">\texttt</div>
<div class="t" style="left:557.00px;top:253.85px;font:13.33px 'Liberation Mono',monospace;height:0;line-height:0;color:#000;">{</div>
<div class="t" style="left:565.00px;top:253.85px;font:13.33px 'Liberation Mono',monospace;height:0;line-height:0;color:#000;">#1</div>
<svg style="left:565px;top:257.6px;" width="16" height="3" viewBox="0 0 16 3"><path d="M0 2 l1.5 -1.4 l1.5 1.4 l1.5 -1.4 l1.5 1.4 l1.5 -1.4 l1.5 1.4 l1.5 -1.4 l1.5 1.4 l1.5 -1.4 l1.5 1.4" fill="none" stroke="#f01010" stroke-width="1.1"/></svg>
<div class="t" style="left:581.00px;top:253.85px;font:13.33px 'Liberation Mono',monospace;height:0;line-height:0;color:#000;">}}</div>
<div class="t" style="left:259.48px;top:270.16px;font:13.4px 'Liberation Sans',sans-serif;height:0;line-height:0;color:#1b6b76;letter-spacing:0.200px;">22</div>
<div class="t" style="left:259.48px;top:287.16px;font:13.4px 'Liberation Sans',sans-serif;height:0;line-height:0;color:#1b6b76;letter-spacing:0.200px;">23</div>
<div class="t" style="left:317.00px;top:287.85px;font:13.33px 'Liberation Mono',monospace;height:0;line-height:0;color:#800000;">\newcommand</div>
<div class="t" style="left:405.00px;top:287.85px;font:13.33px 'Liberation Mono',monospace;height:0;line-height:0;color:#000;">{</div>
<div class="t" style="left:413.00px;top:287.85px;font:13.33px 'Liberation Mono',monospace;height:0;line-height:0;color:#800000;">\function</div>
<div class="t" style="left:485.00px;top:287.85px;font:13.33px 'Liberation Mono',monospace;height:0;line-height:0;color:#000;">}[1]{</div>
<div class="t" style="left:525.00px;top:287.85px;font:13.33px 'Liberation Mono',monospace;height:0;line-height:0;color:#800000;">\textbf</div>
<div class="t" style="left:581.00px;top:287.85px;font:13.33px 'Liberation Mono',monospace;height:0;line-height:0;color:#000;">{</div>
<div class="t" style="left:589.00px;top:287.85px;font:13.33px 'Liberation Mono',monospace;height:0;line-height:0;color:#000;">#1</div>
<svg style="left:589px;top:291.6px;" width="16" height="3" viewBox="0 0 16 3"><path d="M0 2 l1.5 -1.4 l1.5 1.4 l1.5 -1.4 l1.5 1.4 l1.5 -1.4 l1.5 1.4 l1.5 -1.4 l1.5 1.4 l1.5 -1.4 l1.5 1.4" fill="none" stroke="#f01010" stroke-width="1.1"/></svg>
<div class="t" style="left:605.00px;top:287.85px;font:13.33px 'Liberation Mono',monospace;height:0;line-height:0;color:#000;">}}</div>
<div class="t" style="left:259.48px;top:304.16px;font:13.4px 'Liberation Sans',sans-serif;height:0;line-height:0;color:#1b6b76;letter-spacing:0.200px;">24</div>
<div class="t" style="left:317.00px;top:304.85px;font:13.33px 'Liberation Mono',monospace;height:0;line-height:0;color:#800000;">\newcommand</div>
<div class="t" style="left:405.00px;top:304.85px;font:13.33px 'Liberation Mono',monospace;height:0;line-height:0;color:#000;">{</div>
<div class="t" style="left:413.00px;top:304.85px;font:13.33px 'Liberation Mono',monospace;height:0;line-height:0;color:#800000;">\type</div>
<div class="t" style="left:453.00px;top:304.85px;font:13.33px 'Liberation Mono',monospace;height:0;line-height:0;color:#000;">}[1]{</div>
<div class="t" style="left:493.00px;top:304.85px;font:13.33px 'Liberation Mono',monospace;height:0;line-height:0;color:#800000;">\texttt</div>
<div class="t" style="left:549.00px;top:304.85px;font:13.33px 'Liberation Mono',monospace;height:0;line-height:0;color:#000;">{</div>
<div class="t" style="left:557.00px;top:304.85px;font:13.33px 'Liberation Mono',monospace;height:0;line-height:0;color:#000;">#1</div>
<svg style="left:557px;top:308.6px;" width="16" height="3" viewBox="0 0 16 3"><path d="M0 2 l1.5 -1.4 l1.5 1.4 l1.5 -1.4 l1.5 1.4 l1.5 -1.4 l1.5 1.4 l1.5 -1.4 l1.5 1.4 l1.5 -1.4 l1.5 1.4" fill="none" stroke="#f01010" stroke-width="1.1"/></svg>
<div class="t" style="left:573.00px;top:304.85px;font:13.33px 'Liberation Mono',monospace;height:0;line-height:0;color:#000;">}}</div>
<div class="t" style="left:259.48px;top:321.16px;font:13.4px 'Liberation Sans',sans-serif;height:0;line-height:0;color:#1b6b76;letter-spacing:0.200px;">25</div>
<div class="t" style="left:317.00px;top:321.85px;font:13.33px 'Liberation Mono',monospace;height:0;line-height:0;color:#800000;">\renewcommand</div>
<div class="t" style="left:421.00px;top:321.85px;font:13.33px 'Liberation Mono',monospace;height:0;line-height:0;color:#000;">{</div>
<div class="t" style="left:429.00px;top:321.85px;font:13.33px 'Liberation Mono',monospace;height:0;line-height:0;color:#800000;">\arg</div>
<div class="t" style="left:461.00px;top:321.85px;font:13.33px 'Liberation Mono',monospace;height:0;line-height:0;color:#000;">}[1]{</div>
<div class="t" style="left:501.00px;top:321.85px;font:13.33px 'Liberation Mono',monospace;height:0;line-height:0;color:#800000;">\textsl</div>
<div class="t" style="left:557.00px;top:321.85px;font:13.33px 'Liberation Mono',monospace;height:0;line-height:0;color:#000;">{</div>
<div class="t" style="left:565.00px;top:321.85px;font:13.33px 'Liberation Mono',monospace;height:0;line-height:0;color:#000;">#1</div>
<svg style="left:565px;top:325.6px;" width="16" height="3" viewBox="0 0 16 3"><path d="M0 2 l1.5 -1.4 l1.5 1.4 l1.5 -1.4 l1.5 1.4 l1.5 -1.4 l1.5 1.4 l1.5 -1.4 l1.5 1.4 l1.5 -1.4 l1.5 1.4" fill="none" stroke="#f01010" stroke-width="1.1"/></svg>
<div class="t" style="left:581.00px;top:321.85px;font:13.33px 'Liberation Mono',monospace;height:0;line-height:0;color:#000;">}}</div>
<div class="t" style="left:259.48px;top:338.16px;font:13.4px 'Liberation Sans',sans-serif;height:0;line-height:0;color:#1b6b76;letter-spacing:0.200px;">26</div>
<div class="t" style="left:317.00px;top:338.85px;font:13.33px 'Liberation Mono',monospace;height:0;line-height:0;color:#800000;">\newcommand</div>
<div class="t" style="left:405.00px;top:338.85px;font:13.33px 'Liberation Mono',monospace;height:0;line-height:0;color:#000;">{</div>
<div class="t" style="left:413.00px;top:338.85px;font:13.33px 'Liberation Mono',monospace;height:0;line-height:0;color:#800000;">\variable</div>
<div class="t" style="left:485.00px;top:338.85px;font:13.33px 'Liberation Mono',monospace;height:0;line-height:0;color:#000;">}[1]{</div>
<div class="t" style="left:525.00px;top:338.85px;font:13.33px 'Liberation Mono',monospace;height:0;line-height:0;color:#800000;">\textsl</div>
<div class="t" style="left:581.00px;top:338.85px;font:13.33px 'Liberation Mono',monospace;height:0;line-height:0;color:#000;">{</div>
<div class="t" style="left:589.00px;top:338.85px;font:13.33px 'Liberation Mono',monospace;height:0;line-height:0;color:#000;">#1</div>
<svg style="left:589px;top:342.6px;" width="16" height="3" viewBox="0 0 16 3"><path d="M0 2 l1.5 -1.4 l1.5 1.4 l1.5 -1.4 l1.5 1.4 l1.5 -1.4 l1.5 1.4 l1.5 -1.4 l1.5 1.4 l1.5 -1.4 l1.5 1.4" fill="none" stroke="#f01010" stroke-width="1.1"/></svg>
<div class="t" style="left:605.00px;top:338.85px;font:13.33px 'Liberation Mono',monospace;height:0;line-height:0;color:#000;">}}</div>
<div class="t" style="left:259.48px;top:355.16px;font:13.4px 'Liberation Sans',sans-serif;height:0;line-height:0;color:#1b6b76;letter-spacing:0.200px;">27</div>
<div class="t" style="left:317.00px;top:355.85px;font:13.33px 'Liberation Mono',monospace;height:0;line-height:0;color:#800000;">\usepackage</div>
<div class="t" style="left:405.00px;top:355.85px;font:13.33px 'Liberation Mono',monospace;height:0;line-height:0;color:#000;">{hyperref}</div>
<div class="t" style="left:259.48px;top:372.16px;font:13.4px 'Liberation Sans',sans-serif;height:0;line-height:0;color:#1b6b76;letter-spacing:0.200px;">28</div>
<div class="t" style="left:317.00px;top:372.85px;font:13.33px 'Liberation Mono',monospace;height:0;line-height:0;color:#0a0ad2;">\begin</div>
<div class="t" style="left:365.00px;top:372.85px;font:13.33px 'Liberation Mono',monospace;height:0;line-height:0;color:#000;">{document}</div>
<div class="t" style="left:259.48px;top:389.16px;font:13.4px 'Liberation Sans',sans-serif;height:0;line-height:0;color:#1b6b76;letter-spacing:0.200px;">29</div>
<div class="t" style="left:259.48px;top:406.16px;font:13.4px 'Liberation Sans',sans-serif;height:0;line-height:0;color:#1b6b76;letter-spacing:0.200px;">30</div>
<div class="t" style="left:317.00px;top:406.85px;font:13.33px 'Liberation Mono',monospace;height:0;line-height:0;color:#800000;">\maketitle</div>
<div class="t" style="left:259.48px;top:423.16px;font:13.4px 'Liberation Sans',sans-serif;height:0;line-height:0;color:#1b6b76;letter-spacing:0.200px;">31</div>
<div class="t" style="left:259.48px;top:440.16px;font:13.4px 'Liberation Sans',sans-serif;height:0;line-height:0;color:#1b6b76;letter-spacing:0.200px;">32</div>
<div class="t" style="left:317.00px;top:440.85px;font:13.33px 'Liberation Mono',monospace;height:0;line-height:0;color:#800000;">\tableofcontents</div>
<div class="t" style="left:259.48px;top:457.16px;font:13.4px 'Liberation Sans',sans-serif;height:0;line-height:0;color:#1b6b76;letter-spacing:0.200px;">33</div>
<div class="t" style="left:259.48px;top:474.16px;font:13.4px 'Liberation Sans',sans-serif;height:0;line-height:0;color:#1b6b76;letter-spacing:0.200px;">34</div>
<div class="t" style="left:317.00px;top:474.85px;font:13.33px 'Liberation Mono',monospace;height:0;line-height:0;color:#800000;">\parskip=5pt</div>
<div class="t" style="left:259.48px;top:491.16px;font:13.4px 'Liberation Sans',sans-serif;height:0;line-height:0;color:#1b6b76;letter-spacing:0.200px;">35</div>
<div class="t" style="left:317.00px;top:491.85px;font:13.33px 'Liberation Mono',monospace;height:0;line-height:0;color:#800000;">\pagebreak</div>
<div class="t" style="left:259.48px;top:508.16px;font:13.4px 'Liberation Sans',sans-serif;height:0;line-height:0;color:#1b6b76;letter-spacing:0.200px;">36</div>
<div class="t" style="left:317.00px;top:508.85px;font:13.33px 'Liberation Mono',monospace;height:0;line-height:0;color:#800000;">\error</div>
<div class="t" style="left:259.48px;top:525.16px;font:13.4px 'Liberation Sans',sans-serif;height:0;line-height:0;color:#1b6b76;letter-spacing:0.200px;">37</div>
<div class="t" style="left:317.00px;top:525.85px;font:13.33px 'Liberation Mono',monospace;height:0;line-height:0;color:#0a0ad2;">\section</div>
<div class="t" style="left:381.00px;top:525.85px;font:13.33px 'Liberation Mono',monospace;height:0;line-height:0;color:#000;">{Introduction}</div>
<div class="t" style="left:259.48px;top:542.16px;font:13.4px 'Liberation Sans',sans-serif;height:0;line-height:0;color:#1b6b76;letter-spacing:0.200px;">38</div>
<div class="t" style="left:259.48px;top:559.16px;font:13.4px 'Liberation Sans',sans-serif;height:0;line-height:0;color:#1b6b76;letter-spacing:0.200px;">39</div>
<div class="t" style="left:317.00px;top:559.85px;font:13.33px 'Liberation Mono',monospace;height:0;line-height:0;color:#000;">This document essentially sets up various simple scenarios</div>
<div class="t" style="left:317.00px;top:576.85px;font:13.33px 'Liberation Mono',monospace;height:0;line-height:0;color:#000;">and then</div>
<div class="t" style="left:259.48px;top:593.16px;font:13.4px 'Liberation Sans',sans-serif;height:0;line-height:0;color:#1b6b76;letter-spacing:0.200px;">40</div>
<div class="t" style="left:317.00px;top:593.85px;font:13.33px 'Liberation Mono',monospace;height:0;line-height:0;color:#000;">shows how to solve the problems using </div>
<div class="t" style="left:621.00px;top:593.85px;font:13.33px 'Liberation Mono',monospace;height:0;line-height:0;color:#000;">Botan</div>
<svg style="left:621px;top:597.6px;" width="40" height="3" viewBox="0 0 40 3"><path d="M0 2 l1.5 -1.4 l1.5 1.4 l1.5 -1.4 l1.5 1.4 l1.5 -1.4 l1.5 1.4 l1.5 -1.4 l1.5 1.4 l1.5 -1.4 l1.5 1.4 l1.5 -1.4 l1.5 1.4 l1.5 -1.4 l1.5 1.4 l1.5 -1.4 l1.5 1.4 l1.5 -1.4 l1.5 1.4 l1.5 -1.4 l1.5 1.4 l1.5 -1.4 l1.5 1.4 l1.5 -1.4 l1.5 1.4 l1.5 -1.4 l1.5 1.4" fill="none" stroke="#f01010" stroke-width="1.1"/></svg>
<div class="t" style="left:661.00px;top:593.85px;font:13.33px 'Liberation Mono',monospace;height:0;line-height:0;color:#000;">. It&#x27;s fairly</div>
<div class="t" style="left:317.00px;top:610.85px;font:13.33px 'Liberation Mono',monospace;height:0;line-height:0;color:#000;">simple, and</div>
<div class="t" style="left:259.48px;top:627.16px;font:13.4px 'Liberation Sans',sans-serif;height:0;line-height:0;color:#1b6b76;letter-spacing:0.200px;">41</div>
<div class="t" style="left:317.00px;top:627.85px;font:13.33px 'Liberation Mono',monospace;height:0;line-height:0;color:#000;">doesn&#x27;t cover many of the available </div>
<div class="t" style="left:605.00px;top:627.85px;font:13.33px 'Liberation Mono',monospace;height:0;line-height:0;color:#000;">APIs</div>
<svg style="left:605px;top:631.6px;" width="32" height="3" viewBox="0 0 32 3"><path d="M0 2 l1.5 -1.4 l1.5 1.4 l1.5 -1.4 l1.5 1.4 l1.5 -1.4 l1.5 1.4 l1.5 -1.4 l1.5 1.4 l1.5 -1.4 l1.5 1.4 l1.5 -1.4 l1.5 1.4 l1.5 -1.4 l1.5 1.4 l1.5 -1.4 l1.5 1.4 l1.5 -1.4 l1.5 1.4 l1.5 -1.4 l1.5 1.4" fill="none" stroke="#f01010" stroke-width="1.1"/></svg>
<div class="t" style="left:637.00px;top:627.85px;font:13.33px 'Liberation Mono',monospace;height:0;line-height:0;color:#000;"> and algorithms,</div>
<div class="t" style="left:317.00px;top:644.85px;font:13.33px 'Liberation Mono',monospace;height:0;line-height:0;color:#000;">especially</div>
<div class="t" style="left:259.48px;top:661.16px;font:13.4px 'Liberation Sans',sans-serif;height:0;line-height:0;color:#1b6b76;letter-spacing:0.200px;">42</div>
<div class="t" style="left:317.00px;top:661.85px;font:13.33px 'Liberation Mono',monospace;height:0;line-height:0;color:#000;">the more obscure or unusual ones. It is a supplement to the</div>
<div class="t" style="left:317.00px;top:678.85px;font:13.33px 'Liberation Mono',monospace;height:0;line-height:0;color:#000;">API</div>
<svg style="left:317px;top:682.6px;" width="24" height="3" viewBox="0 0 24 3"><path d="M0 2 l1.5 -1.4 l1.5 1.4 l1.5 -1.4 l1.5 1.4 l1.5 -1.4 l1.5 1.4 l1.5 -1.4 l1.5 1.4 l1.5 -1.4 l1.5 1.4 l1.5 -1.4 l1.5 1.4 l1.5 -1.4 l1.5 1.4 l1.5 -1.4 l1.5 1.4" fill="none" stroke="#f01010" stroke-width="1.1"/></svg>
<div class="t" style="left:259.48px;top:695.16px;font:13.4px 'Liberation Sans',sans-serif;height:0;line-height:0;color:#1b6b76;letter-spacing:0.200px;">43</div>
<div class="t" style="left:317.00px;top:695.85px;font:13.33px 'Liberation Mono',monospace;height:0;line-height:0;color:#000;">documentation and the example applications, which are</div>
<div class="t" style="left:317.00px;top:712.85px;font:13.33px 'Liberation Mono',monospace;height:0;line-height:0;color:#000;">included in the</div>
<div class="t" style="left:259.48px;top:729.16px;font:13.4px 'Liberation Sans',sans-serif;height:0;line-height:0;color:#1b6b76;letter-spacing:0.200px;">44</div>
<div class="t" style="left:317.00px;top:729.85px;font:13.33px 'Liberation Mono',monospace;height:0;line-height:0;color:#000;">distribution.</div>
<div class="t" style="left:259.48px;top:746.16px;font:13.4px 'Liberation Sans',sans-serif;height:0;line-height:0;color:#1b6b76;letter-spacing:0.200px;">45</div>
<div class="t" style="left:259.48px;top:763.16px;font:13.4px 'Liberation Sans',sans-serif;height:0;line-height:0;color:#1b6b76;letter-spacing:0.200px;">46</div>
<div class="t" style="left:317.00px;top:763.85px;font:13.33px 'Liberation Mono',monospace;height:0;line-height:0;color:#000;">To quote the </div>
<div class="t" style="left:421.00px;top:763.85px;font:13.33px 'Liberation Mono',monospace;height:0;line-height:0;color:#000;">Perl</div>
<svg style="left:421px;top:767.6px;" width="32" height="3" viewBox="0 0 32 3"><path d="M0 2 l1.5 -1.4 l1.5 1.4 l1.5 -1.4 l1.5 1.4 l1.5 -1.4 l1.5 1.4 l1.5 -1.4 l1.5 1.4 l1.5 -1.4 l1.5 1.4 l1.5 -1.4 l1.5 1.4 l1.5 -1.4 l1.5 1.4 l1.5 -1.4 l1.5 1.4 l1.5 -1.4 l1.5 1.4 l1.5 -1.4 l1.5 1.4" fill="none" stroke="#f01010" stroke-width="1.1"/></svg>
<div class="t" style="left:453.00px;top:763.85px;font:13.33px 'Liberation Mono',monospace;height:0;line-height:0;color:#000;"> man page: &#x27;``There&#x27;s more than one way to</div>
<div class="t" style="left:317.00px;top:780.85px;font:13.33px 'Liberation Mono',monospace;height:0;line-height:0;color:#000;">do it.&#x27;&#x27;</div>
<div class="t" style="left:259.48px;top:797.16px;font:13.4px 'Liberation Sans',sans-serif;height:0;line-height:0;color:#1b6b76;letter-spacing:0.200px;">47</div>
<div class="t" style="left:317.00px;top:797.85px;font:13.33px 'Liberation Mono',monospace;height:0;line-height:0;color:#000;">Divining how many more is left as an exercise to the reader.&#x27;</div>
<div class="t" style="left:259.48px;top:814.16px;font:13.4px 'Liberation Sans',sans-serif;height:0;line-height:0;color:#1b6b76;letter-spacing:0.200px;">48</div>
<div class="t" style="left:259.48px;top:831.16px;font:13.4px 'Liberation Sans',sans-serif;height:0;line-height:0;color:#1b6b76;letter-spacing:0.200px;">49</div>
<div class="t" style="left:317.00px;top:831.85px;font:13.33px 'Liberation Mono',monospace;height:0;line-height:0;color:#000;">This is </div>
<div class="t" style="left:381.00px;top:831.85px;font:13.33px 'Liberation Mono',monospace;height:0;line-height:0;color:#800000;">\emph</div>
<div class="t" style="left:421.00px;top:831.85px;font:13.33px 'Liberation Mono',monospace;height:0;line-height:0;color:#000;">{not} a general introduction to cryptography,</div>
<div class="t" style="left:317.00px;top:848.85px;font:13.33px 'Liberation Mono',monospace;height:0;line-height:0;color:#000;">and most simple</div>
<div class="t" style="left:259.48px;top:865.16px;font:13.4px 'Liberation Sans',sans-serif;height:0;line-height:0;color:#1b6b76;letter-spacing:0.200px;">50</div>
<div class="t" style="left:317.00px;top:865.85px;font:13.33px 'Liberation Mono',monospace;height:0;line-height:0;color:#000;">terms and ideas are not explained in any great detail.</div>
<div class="t" style="left:259.48px;top:882.16px;font:13.4px 'Liberation Sans',sans-serif;height:0;line-height:0;color:#1b6b76;letter-spacing:0.200px;">51</div>
<div class="a" style="left:829.5px;top:210px;width:44.5px;height:17px;border-radius:3px;background:linear-gradient(#66a8f2,#4d94e6 55%,#408ae0);border:1px solid #3a7bd0"></div>
<div class="t" style="left:831.80px;top:117.16px;font:13.4px 'Liberation Sans',sans-serif;height:0;line-height:0;color:#1b6b76;letter-spacing:0.200px;">1</div>
<div class="t" style="left:831.80px;top:134.16px;font:13.4px 'Liberation Sans',sans-serif;height:0;line-height:0;color:#1b6b76;letter-spacing:0.200px;">2</div>
<div class="t" style="left:831.80px;top:151.16px;font:13.4px 'Liberation Sans',sans-serif;height:0;line-height:0;color:#1b6b76;letter-spacing:0.200px;">3</div>
<div class="t" style="left:831.80px;top:168.16px;font:13.4px 'Liberation Sans',sans-serif;height:0;line-height:0;color:#1b6b76;letter-spacing:0.200px;">4</div>
<div class="t" style="left:831.80px;top:185.16px;font:13.4px 'Liberation Sans',sans-serif;height:0;line-height:0;color:#1b6b76;letter-spacing:0.200px;">5</div>
<div class="t" style="left:831.80px;top:202.16px;font:13.4px 'Liberation Sans',sans-serif;height:0;line-height:0;color:#1b6b76;letter-spacing:0.200px;">6</div>
<div class="t" style="left:831.80px;top:219.16px;font:13.4px 'Liberation Sans',sans-serif;height:0;line-height:0;color:#fff;letter-spacing:0.200px;">7</div>
<div class="t" style="left:831.80px;top:236.16px;font:13.4px 'Liberation Sans',sans-serif;height:0;line-height:0;color:#1b6b76;letter-spacing:0.200px;">8</div>
<div class="t" style="left:831.80px;top:253.16px;font:13.4px 'Liberation Sans',sans-serif;height:0;line-height:0;color:#1b6b76;letter-spacing:0.200px;">9</div>
<div class="t" style="left:831.80px;top:270.16px;font:13.4px 'Liberation Sans',sans-serif;height:0;line-height:0;color:#1b6b76;letter-spacing:0.200px;">10</div>
<div class="t" style="left:831.80px;top:287.16px;font:13.4px 'Liberation Sans',sans-serif;height:0;line-height:0;color:#1b6b76;letter-spacing:0.200px;">11</div>
<div class="t" style="left:831.80px;top:304.16px;font:13.4px 'Liberation Sans',sans-serif;height:0;line-height:0;color:#1b6b76;letter-spacing:0.200px;">12</div>
<div class="t" style="left:831.80px;top:321.16px;font:13.4px 'Liberation Sans',sans-serif;height:0;line-height:0;color:#1b6b76;letter-spacing:0.200px;">13</div>
<div class="t" style="left:831.80px;top:338.16px;font:13.4px 'Liberation Sans',sans-serif;height:0;line-height:0;color:#1b6b76;letter-spacing:0.200px;">14</div>
<div class="t" style="left:831.80px;top:355.16px;font:13.4px 'Liberation Sans',sans-serif;height:0;line-height:0;color:#1b6b76;letter-spacing:0.200px;">15</div>
<div class="t" style="left:831.80px;top:372.16px;font:13.4px 'Liberation Sans',sans-serif;height:0;line-height:0;color:#1b6b76;letter-spacing:0.200px;">16</div>
<div class="a" style="left:875px;top:107px;width:531px;height:762px;overflow:hidden;background:#fff">
<div class="a" style="left:0px;top:573px;width:531px;height:10px;background:#cbcbcb"></div>
<div class="t" style="left:95.30px;top:13.69px;font:9.47px 'Liberation Mono',monospace;height:0;line-height:0;color:#111;-webkit-text-stroke:0.1px #222;">Pipe pipe(new MAC_Filter(&quot;HMAC(SHA-256)&quot;, mac_key),</div>
<div class="t" style="left:152.00px;top:26.69px;font:9.47px 'Liberation Mono',monospace;height:0;line-height:0;color:#111;-webkit-text-stroke:0.1px #222;">new Hex_Encoder</div>
<div class="t" style="left:95.30px;top:39.69px;font:9.47px 'Liberation Mono',monospace;height:0;line-height:0;color:#111;-webkit-text-stroke:0.1px #222;">);</div>
<div class="t" style="left:95.30px;top:65.69px;font:9.47px 'Liberation Mono',monospace;height:0;line-height:0;color:#111;-webkit-text-stroke:0.1px #222;">std::cout &lt;&lt; the_salt.to_string(); // hex encoded</div>
<div class="t" style="left:95.30px;top:91.69px;font:9.47px 'Liberation Mono',monospace;height:0;line-height:0;color:#111;-webkit-text-stroke:0.1px #222;">pipe.start_msg();</div>
<div class="t" style="left:95.30px;top:104.69px;font:9.47px 'Liberation Mono',monospace;height:0;line-height:0;color:#111;-webkit-text-stroke:0.1px #222;">infile &gt;&gt; pipe;</div>
<div class="t" style="left:95.30px;top:117.69px;font:9.47px 'Liberation Mono',monospace;height:0;line-height:0;color:#111;-webkit-text-stroke:0.1px #222;">pipe.end_msg();</div>
<div class="t" style="left:95.30px;top:130.69px;font:9.47px 'Liberation Mono',monospace;height:0;line-height:0;color:#111;-webkit-text-stroke:0.1px #222;">std::cout &lt;&lt; pipe.read_all_as_string() &lt;&lt; std::endl;</div>
<div class="t" style="left:78.60px;top:165.11px;font:bold 13px 'Liberation Serif',serif;height:0;line-height:0;color:#111;letter-spacing:0.550px;">4.3</div>
<div class="t" style="left:111.70px;top:165.11px;font:bold 13px 'Liberation Serif',serif;height:0;line-height:0;color:#111;letter-spacing:1.007px;">User Authentication</div>
<div class="t" style="left:78.60px;top:190.59px;font:11px 'Liberation Serif',serif;height:0;line-height:0;color:#333;letter-spacing:0.380px;word-spacing:-0.128px;">Doing user authentication off a shared passphrase is fairly easy.  Essentially, a challenge-respon</div>
<div class="t" style="left:78.60px;top:203.59px;font:11px 'Liberation Serif',serif;height:0;line-height:0;color:#333;letter-spacing:0.380px;word-spacing:0.362px;">is used - the server sends a random challenge, and the client responds with an appropriate resp</div>
<div class="t" style="left:78.60px;top:216.49px;font:11px 'Liberation Serif',serif;height:0;line-height:0;color:#333;letter-spacing:0.380px;word-spacing:-0.796px;">challenge.  The idea is that only someone who knows the passphrase can generate or check to see i</div>
<div class="t" style="left:78.60px;top:229.49px;font:11px 'Liberation Serif',serif;height:0;line-height:0;color:#333;letter-spacing:0.380px;">is valid.</div>
<div class="t" style="left:94.70px;top:248.59px;font:11px 'Liberation Serif',serif;height:0;line-height:0;color:#333;letter-spacing:0.380px;word-spacing:-0.794px;">Let&#x27;s say we use 160-bit (20 byte) challenges, which seems fairly reasonable.  We can create th</div>
<div class="t" style="left:78.60px;top:261.49px;font:11px 'Liberation Serif',serif;height:0;line-height:0;color:#333;letter-spacing:0.380px;">using the global random number generator (RNG):</div>
<div class="t" style="left:95.00px;top:290.89px;font:9.47px 'Liberation Mono',monospace;height:0;line-height:0;color:#111;-webkit-text-stroke:0.1px #222;">byte challenge[20];</div>
<div class="t" style="left:95.00px;top:303.89px;font:9.47px 'Liberation Mono',monospace;height:0;line-height:0;color:#111;-webkit-text-stroke:0.1px #222;">Global_RNG::randomize(challenge, sizeof(challenge), Nonce);</div>
<div class="t" style="left:95.00px;top:316.79px;font:9.47px 'Liberation Mono',monospace;height:0;line-height:0;color:#111;-webkit-text-stroke:0.1px #222;">// send challenge to client</div>
<div class="t" style="left:94.70px;top:344.79px;font:11px 'Liberation Serif',serif;height:0;line-height:0;color:#333;letter-spacing:0.380px;word-spacing:-0.353px;">After reading the challenge, the client generates a response based on the challenge and the pa</div>
<div class="t" style="left:78.60px;top:357.79px;font:11px 'Liberation Serif',serif;height:0;line-height:0;color:#333;letter-spacing:0.380px;word-spacing:-0.076px;">this case, we will do it by repeatedly hashing the challenge, the passphrase, and (if applicable) t</div>
<div class="t" style="left:78.60px;top:370.69px;font:11px 'Liberation Serif',serif;height:0;line-height:0;color:#333;letter-spacing:0.380px;word-spacing:0.187px;">digest.  We iterate this construction 4096 times, to make brute force attacks on the passphrase</div>
<div class="t" style="left:78.60px;top:383.69px;font:11px 'Liberation Serif',serif;height:0;line-height:0;color:#333;letter-spacing:0.380px;word-spacing:-0.653px;">Since we are already using 160-bit challenges, a 160-bit response seems warranted, so we&#x27;ll use S</div>
<div class="t" style="left:95.00px;top:413.79px;font:9.47px 'Liberation Mono',monospace;height:0;line-height:0;color:#111;-webkit-text-stroke:0.1px #222;">HashFunction* hash = get_hash(&quot;SHA-1&quot;);</div>
<div class="t" style="left:95.00px;top:426.69px;font:9.47px 'Liberation Mono',monospace;height:0;line-height:0;color:#111;-webkit-text-stroke:0.1px #222;">SecureVector&lt;byte&gt; digest;</div>
<div class="t" style="left:95.00px;top:439.69px;font:9.47px 'Liberation Mono',monospace;height:0;line-height:0;color:#111;-webkit-text-stroke:0.1px #222;">for(u32bit j = 0; j != 4096; j++)</div>
<div class="t" style="left:112.70px;top:452.69px;font:9.47px 'Liberation Mono',monospace;height:0;line-height:0;color:#111;-webkit-text-stroke:0.1px #222;">{</div>
<div class="t" style="left:112.70px;top:465.59px;font:9.47px 'Liberation Mono',monospace;height:0;line-height:0;color:#111;-webkit-text-stroke:0.1px #222;">hash-&gt;update(digest, digest.size());</div>
<div class="t" style="left:112.70px;top:478.59px;font:9.47px 'Liberation Mono',monospace;height:0;line-height:0;color:#111;-webkit-text-stroke:0.1px #222;">hash-&gt;update(passphrase);</div>
<div class="t" style="left:112.70px;top:491.49px;font:9.47px 'Liberation Mono',monospace;height:0;line-height:0;color:#111;-webkit-text-stroke:0.1px #222;">hash-&gt;update(challenge, challenge.size());</div>
<div class="t" style="left:332.50px;top:523.79px;font:11px 'Liberation Serif',serif;height:0;line-height:0;color:#222;">7</div>
<div class="t" style="left:112.00px;top:669.69px;font:9.47px 'Liberation Mono',monospace;height:0;line-height:0;color:#111;-webkit-text-stroke:0.1px #222;">digest = hash-&gt;final();</div>
<div class="t" style="left:112.00px;top:682.19px;font:9.47px 'Liberation Mono',monospace;height:0;line-height:0;color:#111;-webkit-text-stroke:0.1px #222;">}</div>
<div class="t" style="left:95.20px;top:695.49px;font:9.47px 'Liberation Mono',monospace;height:0;line-height:0;color:#111;-webkit-text-stroke:0.1px #222;">delete hash;</div>
<div class="t" style="left:95.20px;top:708.69px;font:9.47px 'Liberation Mono',monospace;height:0;line-height:0;color:#111;-webkit-text-stroke:0.1px #222;">// send value of digest to the server</div>
<div class="t" style="left:94.40px;top:736.79px;font:11px 'Liberation Serif',serif;height:0;line-height:0;color:#333;letter-spacing:0.380px;word-spacing:0.508px;">Upon receiving the response from the client, the server computes what the response should</div>
<div class="t" style="left:78.00px;top:749.69px;font:11px 'Liberation Serif',serif;height:0;line-height:0;color:#333;letter-spacing:0.380px;word-spacing:-0.573px;">based on the challenge it sent out, and the passphrase.  If the two responses match, the client is au</div>
<div class="t" style="left:78.00px;top:762.69px;font:11px 'Liberation Serif',serif;height:0;line-height:0;color:#333;letter-spacing:0.380px;">Otherwise, it is not.</div>
</div>
<svg style="left:8.2px;top:113px;" width="15" height="15" viewBox="0 0 15 15"><rect x="0.5" y="0.5" width="14" height="14" fill="#fff" stroke="#5a5553" stroke-width="1.1"/><rect x="2.5" y="2.2" width="2" height="10.6" fill="#505050"/><path d="M5.8 3.9 H12.5 M5.8 7.5 H12.5 M5.8 11.1 H12.5" stroke="#505050" stroke-width="1.5"/></svg>
<div class="a" style="left:7px;top:136px;width:18px;height:1.3px;background:rgba(215,224,233,0.8)"></div>
<svg style="left:8.2px;top:143px;" width="15" height="15" viewBox="0 0 15 15"><rect x="0.5" y="0.5" width="14" height="14" fill="#fff" stroke="#5a5553" stroke-width="1.1"/><path d="M13.6 4 V13.6 H4" stroke="#dcdcdc" stroke-width="0.9" fill="none"/><path d="M2.8 7.5 H12.2" stroke="#4a4a4a" stroke-width="1.7"/><circle cx="7.5" cy="3.9" r="1.3" fill="#4a4a4a"/><circle cx="7.5" cy="11.1" r="1.3" fill="#4a4a4a"/></svg>
<svg style="left:8.2px;top:167px;" width="15" height="15" viewBox="0 0 15 15"><rect x="0.5" y="0.5" width="14" height="14" fill="#fff" stroke="#5a5553" stroke-width="1.1"/><path d="M13.6 4 V13.6 H4" stroke="#dcdcdc" stroke-width="0.9" fill="none"/><path d="M1.8 5.6 H10.5 M1.8 9.4 H10.5" stroke="#4a4a4a" stroke-width="1.4"/><path d="M8.5 2.8 L13 7.5 L8.5 12.2" fill="none" stroke="#4a4a4a" stroke-width="1.4"/></svg>
<svg style="left:8.2px;top:191px;" width="15" height="15" viewBox="0 0 15 15"><rect x="0.5" y="0.5" width="14" height="14" fill="#fff" stroke="#5a5553" stroke-width="1.1"/><path d="M13.6 4 V13.6 H4" stroke="#dcdcdc" stroke-width="0.9" fill="none"/><path d="M2.6 2.5 L7.5 13 L12.4 2.5 M4.6 7 H10.4" fill="none" stroke="#4a4a4a" stroke-width="1.8"/></svg>
<svg style="left:8.2px;top:215px;" width="15" height="15" viewBox="0 0 15 15"><rect x="0.5" y="0.5" width="14" height="14" fill="#fff" stroke="#5a5553" stroke-width="1.1"/><path d="M13.6 4 V13.6 H4" stroke="#dcdcdc" stroke-width="0.9" fill="none"/><text x="7.5" y="12" text-anchor="middle" font-family="Liberation Sans"   font-size="12.5" fill="#4a4a4a" textLength="11" lengthAdjust="spacingAndGlyphs" >{ }</text></svg>
<svg style="left:8.2px;top:239px;" width="15" height="15" viewBox="0 0 15 15"><rect x="0.5" y="0.5" width="14" height="14" fill="#fff" stroke="#5a5553" stroke-width="1.1"/><path d="M13.6 4 V13.6 H4" stroke="#dcdcdc" stroke-width="0.9" fill="none"/><text x="7.5" y="12.5" text-anchor="middle" font-family="Liberation Sans" font-weight="bold"  font-size="13.5" fill="#4a4a4a"  >λ</text></svg>
<svg style="left:8.2px;top:263px;" width="15" height="15" viewBox="0 0 15 15"><rect x="0.5" y="0.5" width="14" height="14" fill="#fff" stroke="#5a5553" stroke-width="1.1"/><path d="M13.6 4 V13.6 H4" stroke="#dcdcdc" stroke-width="0.9" fill="none"/><text x="7.5" y="12.3" text-anchor="middle" font-family="Liberation Sans" font-weight="bold"  font-size="15" fill="#4a4a4a"  >∞</text></svg>
<svg style="left:8.2px;top:287px;" width="15" height="15" viewBox="0 0 15 15"><rect x="0.5" y="0.5" width="14" height="14" fill="#fff" stroke="#5a5553" stroke-width="1.1"/><path d="M13.6 4 V13.6 H4" stroke="#dcdcdc" stroke-width="0.9" fill="none"/><path d="M7.5 1.8 V13.2 M2.6 4.6 L12.4 10.4 M12.4 4.6 L2.6 10.4" stroke="#4a4a4a" stroke-width="1.9"/></svg>
<div class="a" style="left:7px;top:310px;width:18px;height:1.3px;background:rgba(215,224,233,0.8)"></div>
<svg style="left:8.2px;top:317px;" width="15" height="15" viewBox="0 0 15 15"><rect x="0.5" y="0.5" width="14" height="14" fill="#fff" stroke="#5a5553" stroke-width="1.1"/><path d="M13.6 4 V13.6 H4" stroke="#dcdcdc" stroke-width="0.9" fill="none"/><text x="7.5" y="12" text-anchor="middle" font-family="Liberation Sans" font-weight="bold"  font-size="11" fill="#4a4a4a" textLength="11" lengthAdjust="spacingAndGlyphs" >(].</text></svg>
<div class="a" style="left:7px;top:340px;width:18px;height:1.3px;background:rgba(215,224,233,0.8)"></div>
<svg style="left:8.2px;top:347px;" width="15" height="15" viewBox="0 0 15 15"><rect x="0.5" y="0.5" width="14" height="14" fill="#fff" stroke="#5a5553" stroke-width="1.1"/><path d="M13.6 4 V13.6 H4" stroke="#dcdcdc" stroke-width="0.9" fill="none"/><text x="7.5" y="11.6" text-anchor="middle" font-family="Liberation Sans" font-weight="bold"  font-size="10" fill="#4a4a4a" textLength="11" lengthAdjust="spacingAndGlyphs" >PS</text></svg>
<svg style="left:8.2px;top:371px;" width="15" height="15" viewBox="0 0 15 15"><rect x="0.5" y="0.5" width="14" height="14" fill="#fff" stroke="#5a5553" stroke-width="1.1"/><path d="M13.6 4 V13.6 H4" stroke="#dcdcdc" stroke-width="0.9" fill="none"/><text x="7.5" y="11.6" text-anchor="middle" font-family="Liberation Sans" font-weight="bold"  font-size="10" fill="#4a4a4a" textLength="11.5" lengthAdjust="spacingAndGlyphs" >MP</text></svg>
<svg style="left:8.2px;top:395px;" width="15" height="15" viewBox="0 0 15 15"><rect x="0.5" y="0.5" width="14" height="14" fill="#fff" stroke="#5a5553" stroke-width="1.1"/><path d="M13.6 4 V13.6 H4" stroke="#dcdcdc" stroke-width="0.9" fill="none"/><text x="7.5" y="11.6" text-anchor="middle" font-family="Liberation Sans" font-weight="bold"  font-size="10" fill="#4a4a4a" textLength="9" lengthAdjust="spacingAndGlyphs" >TI</text></svg>
<svg style="left:8.2px;top:419px;" width="15" height="15" viewBox="0 0 15 15"><rect x="0.5" y="0.5" width="14" height="14" fill="#fff" stroke="#5a5553" stroke-width="1.1"/><path d="M13.6 4 V13.6 H4" stroke="#dcdcdc" stroke-width="0.9" fill="none"/><text x="7.5" y="11.6" text-anchor="middle" font-family="Liberation Sans" font-weight="bold"  font-size="10" fill="#4a4a4a" textLength="11" lengthAdjust="spacingAndGlyphs" >AS</text></svg>
<svg style="left:220.3px;top:113.3px;" width="15" height="15" viewBox="0 0 15 15"><rect x="0.5" y="0.5" width="14" height="14" fill="#fff" stroke="#5a5553" stroke-width="1.1"/><path d="M13.6 4 V13.6 H4" stroke="#dcdcdc" stroke-width="0.9" fill="none"/><text x="7.5" y="12.3" text-anchor="middle" font-family="Liberation Sans" font-weight="bold"  font-size="13" fill="#4a4a4a"  >B</text></svg>
<svg style="left:220.3px;top:137.3px;" width="15" height="15" viewBox="0 0 15 15"><rect x="0.5" y="0.5" width="14" height="14" fill="#fff" stroke="#5a5553" stroke-width="1.1"/><path d="M13.6 4 V13.6 H4" stroke="#dcdcdc" stroke-width="0.9" fill="none"/><text x="7.5" y="12.2" text-anchor="middle" font-family="Liberation Serif" font-weight="bold" font-style="italic" font-size="13" fill="#4a4a4a"  >i</text></svg>
<svg style="left:220.3px;top:161.3px;" width="15" height="15" viewBox="0 0 15 15"><rect x="0.5" y="0.5" width="14" height="14" fill="#fff" stroke="#5a5553" stroke-width="1.1"/><path d="M13.6 4 V13.6 H4" stroke="#dcdcdc" stroke-width="0.9" fill="none"/><text x="7.5" y="10.8" text-anchor="middle" font-family="Liberation Sans" font-weight="bold" font-size="11" fill="#4a4a4a">U</text><path d="M2.8 12.6 H12.2" stroke="#4a4a4a" stroke-width="1.2"/></svg>
<svg style="left:220.3px;top:185.3px;" width="15" height="15" viewBox="0 0 15 15"><rect x="0.5" y="0.5" width="14" height="14" fill="#fff" stroke="#5a5553" stroke-width="1.1"/><path d="M13.6 4 V13.6 H4" stroke="#dcdcdc" stroke-width="0.9" fill="none"/><path d="M2.8 3.7 H12.2 M2.8 7.5 H9 M2.8 11.3 H10.8" stroke="#4a4a4a" stroke-width="1.6"/></svg>
<svg style="left:220.3px;top:209.3px;" width="15" height="15" viewBox="0 0 15 15"><rect x="0.5" y="0.5" width="14" height="14" fill="#fff" stroke="#5a5553" stroke-width="1.1"/><path d="M13.6 4 V13.6 H4" stroke="#dcdcdc" stroke-width="0.9" fill="none"/><path d="M2.8 3.7 H12.2 M4.5 7.5 H10.5 M3.5 11.3 H11.5" stroke="#4a4a4a" stroke-width="1.6"/></svg>
<svg style="left:220.3px;top:233.3px;" width="15" height="15" viewBox="0 0 15 15"><rect x="0.5" y="0.5" width="14" height="14" fill="#fff" stroke="#5a5553" stroke-width="1.1"/><path d="M13.6 4 V13.6 H4" stroke="#dcdcdc" stroke-width="0.9" fill="none"/><path d="M2.8 3.7 H12.2 M6 7.5 H12.2 M4.2 11.3 H12.2" stroke="#4a4a4a" stroke-width="1.6"/></svg>
<div class="a" style="left:219px;top:256px;width:19px;height:1.3px;background:rgba(215,224,233,0.8)"></div>
<svg style="left:220.3px;top:263.3px;" width="15" height="15" viewBox="0 0 15 15"><rect x="0.5" y="0.5" width="14" height="14" fill="#fff" stroke="#5a5553" stroke-width="1.1"/><path d="M13.6 4 V13.6 H4" stroke="#dcdcdc" stroke-width="0.9" fill="none"/><path d="M11 2.8 V10 H4.5" fill="none" stroke="#4a4a4a" stroke-width="1.8"/><path d="M6.6 6.8 L3.2 10 L6.6 13.2" fill="none" stroke="#4a4a4a" stroke-width="1.7"/></svg>
<div class="a" style="left:219px;top:286px;width:19px;height:1.3px;background:rgba(215,224,233,0.8)"></div>
<svg style="left:220.3px;top:293.3px;" width="15" height="15" viewBox="0 0 15 15"><rect x="0.5" y="0.5" width="14" height="14" fill="#fff" stroke="#5a5553" stroke-width="1.1"/><path d="M13.6 4 V13.6 H4" stroke="#dcdcdc" stroke-width="0.9" fill="none"/><text x="7.5" y="12" text-anchor="middle" font-family="Liberation Sans"   font-size="11" fill="#4a4a4a" textLength="11.5" lengthAdjust="spacingAndGlyphs" stroke="#4a4a4a" stroke-width="0.35">$$</text></svg>
<svg style="left:220.3px;top:317.3px;" width="15" height="15" viewBox="0 0 15 15"><rect x="0.5" y="0.5" width="14" height="14" fill="#fff" stroke="#5a5553" stroke-width="1.1"/><path d="M13.6 4 V13.6 H4" stroke="#dcdcdc" stroke-width="0.9" fill="none"/><text x="1.8" y="9.3" font-family="Liberation Sans" font-size="11" font-weight="bold" fill="#4a4a4a">x</text><rect x="8.5" y="8" width="4.6" height="4.6" fill="none" stroke="#4a4a4a" stroke-width="1"/></svg>
<svg style="left:220.3px;top:341.3px;" width="15" height="15" viewBox="0 0 15 15"><rect x="0.5" y="0.5" width="14" height="14" fill="#fff" stroke="#5a5553" stroke-width="1.1"/><path d="M13.6 4 V13.6 H4" stroke="#dcdcdc" stroke-width="0.9" fill="none"/><text x="1.8" y="13.3" font-family="Liberation Sans" font-size="11" font-weight="bold" fill="#4a4a4a">x</text><rect x="8.5" y="2" width="4.6" height="4.6" fill="none" stroke="#4a4a4a" stroke-width="1"/></svg>
<svg style="left:220.3px;top:365.3px;" width="15" height="15" viewBox="0 0 15 15"><rect x="0.5" y="0.5" width="14" height="14" fill="#fff" stroke="#5a5553" stroke-width="1.1"/><path d="M13.6 4 V13.6 H4" stroke="#dcdcdc" stroke-width="0.9" fill="none"/><path d="M2.8 7.5 H12.2" stroke="#4a4a4a" stroke-width="1.5"/><circle cx="7.5" cy="4.2" r="1.1" fill="#4a4a4a"/><circle cx="7.5" cy="10.8" r="1.1" fill="#4a4a4a"/></svg>
<svg style="left:220.3px;top:389.3px;" width="15" height="15" viewBox="0 0 15 15"><rect x="0.5" y="0.5" width="14" height="14" fill="#fff" stroke="#5a5553" stroke-width="1.1"/><path d="M13.6 4 V13.6 H4" stroke="#dcdcdc" stroke-width="0.9" fill="none"/><path d="M2.8 7.5 H12.2" stroke="#4a4a4a" stroke-width="1.4"/><rect x="5.6" y="2" width="3.8" height="3.6" fill="none" stroke="#4a4a4a" stroke-width="0.9"/><rect x="5.6" y="9.4" width="3.8" height="3.6" fill="none" stroke="#4a4a4a" stroke-width="0.9"/></svg>
<svg style="left:220.3px;top:413.3px;" width="15" height="15" viewBox="0 0 15 15"><rect x="0.5" y="0.5" width="14" height="14" fill="#fff" stroke="#5a5553" stroke-width="1.1"/><path d="M13.6 4 V13.6 H4" stroke="#dcdcdc" stroke-width="0.9" fill="none"/><path d="M2.3 8.6 L4.3 7.9 L6.6 12.8 L9.6 2.8 H13" fill="none" stroke="#4a4a4a" stroke-width="1.2"/></svg>
<div class="a" style="left:811px;top:107px;width:17px;height:779px;background:#e3e1e0"></div>
<div class="a" style="left:811px;top:855.8px;width:17px;height:30.200000000000045px;background:#d3d1cf"></div>
<svg style="left:814.5px;top:113.5px;" width="10" height="7" viewBox="0 0 10 7"><path d="M1 5.5 L5 1.5 L9 5.5" fill="none" stroke="#111" stroke-width="1.5"/></svg>
<div class="a" style="left:813px;top:124px;width:13px;height:731.8px;background:#b8b4b2;border:1px solid #a29d9b;border-radius:4px"></div>
<div class="a" style="left:814.5px;top:135.5px;width:10px;height:30.0px;background:linear-gradient(90deg,#f3f2f1,#dcd9d7);border:1px solid #8a8482;border-radius:3px"></div>
<svg style="left:814.5px;top:860.3px;" width="10" height="7" viewBox="0 0 10 7"><path d="M1 5.5 L5 1.5 L9 5.5" fill="none" stroke="#111" stroke-width="1.5"/></svg>
<svg style="left:814.5px;top:873.5px;" width="10" height="7" viewBox="0 0 10 7"><path d="M1 1.5 L5 5.5 L9 1.5" fill="none" stroke="#111" stroke-width="1.5"/></svg>
<div class="a" style="left:1406px;top:107px;width:17px;height:762px;background:#e3e1e0"></div>
<div class="a" style="left:1406px;top:838px;width:17px;height:31px;background:#d3d1cf"></div>
<svg style="left:1409.5px;top:113.5px;" width="10" height="7" viewBox="0 0 10 7"><path d="M1 5.5 L5 1.5 L9 5.5" fill="none" stroke="#111" stroke-width="1.5"/></svg>
<div class="a" style="left:1408px;top:124px;width:13px;height:714px;background:#b8b4b2;border:1px solid #a29d9b;border-radius:4px"></div>
<div class="a" style="left:1409.5px;top:409.5px;width:10px;height:33.0px;background:linear-gradient(90deg,#f3f2f1,#dcd9d7);border:1px solid #8a8482;border-radius:3px"></div>
<svg style="left:1409.5px;top:842.5px;" width="10" height="7" viewBox="0 0 10 7"><path d="M1 5.5 L5 1.5 L9 5.5" fill="none" stroke="#111" stroke-width="1.5"/></svg>
<svg style="left:1409.5px;top:856.5px;" width="10" height="7" viewBox="0 0 10 7"><path d="M1 1.5 L5 5.5 L9 1.5" fill="none" stroke="#111" stroke-width="1.5"/></svg>
<div class="a" style="left:1406px;top:869px;width:17px;height:17px;background:#d3d1cf"></div>
<div class="a" style="left:29px;top:869px;width:185px;height:17px;background:#d3d1cf"></div>
<svg style="left:33.5px;top:872.5px;" width="7" height="10" viewBox="0 0 7 10"><path d="M5.5 1 L1.5 5 L5.5 9" fill="none" stroke="#111" stroke-width="1.5"/></svg>
<div class="a" style="left:44.1px;top:870.3px;width:139.70000000000002px;height:14px;background:#bab6b4;border:1px solid #a7a2a0;border-radius:4px"></div>
<div class="a" style="left:45.5px;top:871px;width:95.0px;height:12.5px;background:linear-gradient(#f6f5f4,#dcd9d7);border:1px solid #837d7b;border-radius:3px"></div>
<svg style="left:187.8px;top:872.5px;" width="7" height="10" viewBox="0 0 7 10"><path d="M5.5 1 L1.5 5 L5.5 9" fill="none" stroke="#111" stroke-width="1.5"/></svg>
<svg style="left:201.8px;top:872.5px;" width="7" height="10" viewBox="0 0 7 10"><path d="M1.5 1 L5.5 5 L1.5 9" fill="none" stroke="#111" stroke-width="1.5"/></svg>
<div class="a" style="left:875.5px;top:869px;width:530.5px;height:17px;background:#d3d1cf"></div>
<svg style="left:880.0px;top:872.5px;" width="7" height="10" viewBox="0 0 7 10"><path d="M5.5 1 L1.5 5 L5.5 9" fill="none" stroke="#111" stroke-width="1.5"/></svg>
<div class="a" style="left:890px;top:870.3px;width:487px;height:14px;background:#bab6b4;border:1px solid #a7a2a0;border-radius:4px"></div>
<div class="a" style="left:890.5px;top:871px;width:384.5px;height:12.5px;background:linear-gradient(#f6f5f4,#dcd9d7);border:1px solid #837d7b;border-radius:3px"></div>
<svg style="left:1381.0px;top:872.5px;" width="7" height="10" viewBox="0 0 7 10"><path d="M5.5 1 L1.5 5 L5.5 9" fill="none" stroke="#111" stroke-width="1.5"/></svg>
<svg style="left:1395.0px;top:872.5px;" width="7" height="10" viewBox="0 0 7 10"><path d="M1.5 1 L5.5 5 L1.5 9" fill="none" stroke="#111" stroke-width="1.5"/></svg>
<div class="a" style="left:3px;top:885px;width:1420px;height:2px;background:#1f2a33"></div>
<div class="a" style="left:3px;top:887px;width:1420px;height:1px;background:#6b7886"></div>
<div class="a" style="left:3px;top:888px;width:1420px;height:23px;background:#3e4c5a"></div>
<div class="a" style="left:5px;top:889.4px;width:112.3px;height:19.3px;background:linear-gradient(#a9a9a9,#acacac 50%,#bcbcbc);border:1px solid #2d2d2d;border-right-color:#cfcfcf;border-bottom-color:#cfcfcf;box-shadow:inset 0 -1px 0 #e0e0e0;border-radius:2px"></div>
<div class="t" style="left:30.55px;top:899.01px;font:14.1px 'Liberation Sans',sans-serif;height:0;line-height:0;color:#000;letter-spacing:0.256px;">Structure</div>
<div class="a" style="left:124px;top:889.4px;width:112.5px;height:19.3px;background:linear-gradient(#f7f7f7,#e9e9e9 60%,#d9d9d9);border:1px solid #2d2d2d;border-right-color:#8a8a8a;border-bottom-color:#8a8a8a;box-shadow:inset 1px 1px 0 #fff;border-radius:2px"></div>
<div class="t" style="left:129.55px;top:899.01px;font:14.1px 'Liberation Sans',sans-serif;height:0;line-height:0;color:#000;letter-spacing:0.028px;">Messages / Log</div>
<div class="a" style="left:243.7px;top:889.4px;width:111.60000000000002px;height:19.3px;background:linear-gradient(#a9a9a9,#acacac 50%,#bcbcbc);border:1px solid #2d2d2d;border-right-color:#cfcfcf;border-bottom-color:#cfcfcf;box-shadow:inset 0 -1px 0 #e0e0e0;border-radius:2px"></div>
<div class="t" style="left:266.05px;top:899.01px;font:14.1px 'Liberation Sans',sans-serif;height:0;line-height:0;color:#000;letter-spacing:0.149px;">Pdf Viewer</div>
<svg style="left:1408px;top:898px;" width="14" height="14" viewBox="0 0 14 14"><path d="M13 3 L3 13 M13 7 L7 13 M13 11 L11 13" stroke="#5c6a78" stroke-width="0.8"/></svg>
<div class="t" style="left:1259.15px;top:897.81px;font:14.1px 'Liberation Sans',sans-serif;height:0;line-height:0;color:#fff;letter-spacing:-0.009px;">UTF-8</div>
<div class="t" style="left:1313.45px;top:897.81px;font:14.1px 'Liberation Sans',sans-serif;height:0;line-height:0;color:#fff;letter-spacing:0.236px;">Normal Mode</div>
</body></html>
